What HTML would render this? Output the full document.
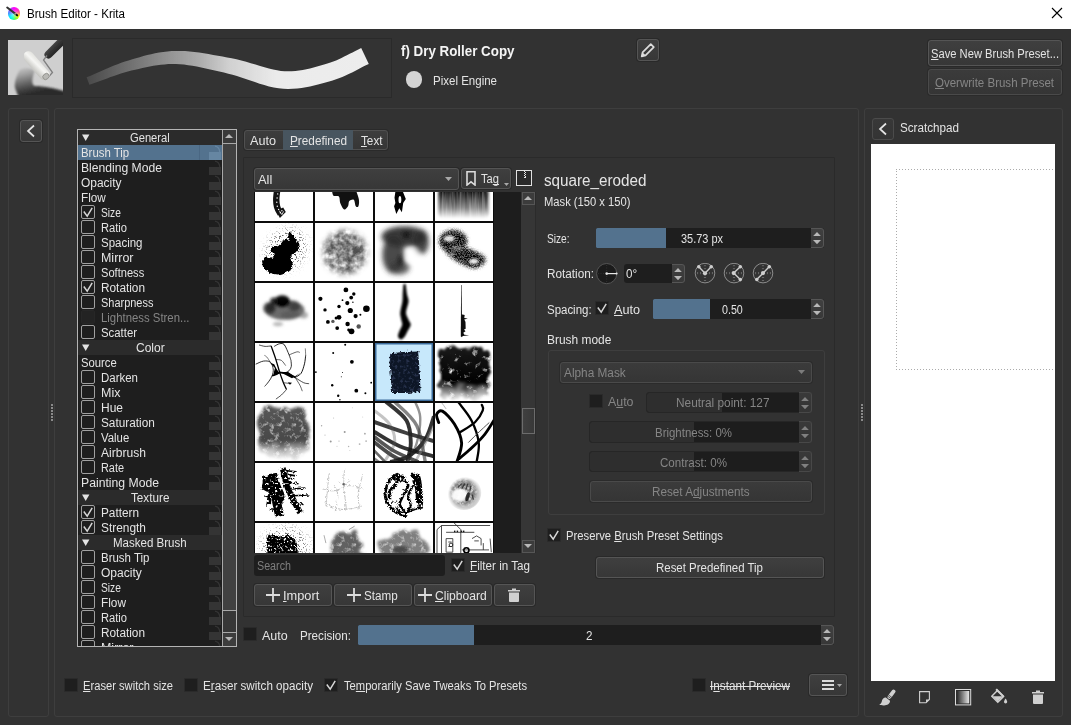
<!DOCTYPE html>
<html><head><meta charset="utf-8"><title>Brush Editor - Krita</title>
<style>

html,body{margin:0;padding:0;}
body{width:1071px;height:725px;overflow:hidden;background:#323232;position:relative;font-family:"Liberation Sans",sans-serif;}
body>div,body>span,body>svg{position:absolute;box-sizing:border-box;}
div div, div svg{position:absolute;box-sizing:border-box;}
.t{position:absolute;white-space:nowrap;display:block;}
u{text-decoration:underline;text-underline-offset:1px;text-decoration-thickness:1px;text-decoration-skip-ink:none;}
.fr{border:1px solid #3e3e3e;border-radius:3px;}
.btn{border:1px solid #555;border-radius:3px;background:linear-gradient(#3f3f3f,#373737);box-shadow:0 0 0 1px #292929;}
.btnd{border:1px solid #4a4a4a;border-radius:3px;background:linear-gradient(#3b3b3b,#353535);box-shadow:0 0 0 1px #2b2b2b;}
.cb{background:#1e1e1e;border:1px solid #2a2a2a;border-radius:1px;}
.lcb{border:1px solid #a0a0a0;border-radius:2px;background:#1e1e1e;}

</style></head>
<body>
<div style="left:0px;top:0px;width:1071px;height:29px;background:#fff;"></div>
<div style="left:7.6px;top:7px;width:12.6px;height:12.6px;border-radius:50%;background:radial-gradient(circle at 50% 55%,rgba(255,255,255,0.55) 0,rgba(255,255,255,0) 55%),conic-gradient(from 0deg,#ff00ff 0deg,#ff30c0 50deg,#ff7a7a 85deg,#ffff00 120deg,#70ff30 160deg,#00ffcc 200deg,#00f0ff 230deg,#4a90ff 275deg,#a050ff 315deg,#ff00ff 360deg);"></div><svg style="left:2px;top:2px;" width="20" height="20" viewBox="0 0 20 20"><path d="M5.2 5.5L13.2 11.6" stroke="#333" stroke-width="2" stroke-linecap="round"/><path d="M12.6 11.2L14 12.3" stroke="#9a9a9a" stroke-width="1.8"/><ellipse cx="14.9" cy="13.1" rx="1.5" ry="1.1" fill="#111" transform="rotate(38 14.9 13.1)"/></svg>
<span id="t0" class="t" style="left:27px;transform-origin:0 50%;top:6px;font-size:12px;line-height:17px;color:#000;transform:scaleX(0.9667);">Brush Editor - Krita</span>
<svg style="left:1051px;top:7px" width="12" height="12" viewBox="0 0 12 12"><path d="M1 1L11 11M11 1L1 11" stroke="#000" stroke-width="1.1" fill="none"/></svg>
<svg style="left:8px;top:40px;overflow:hidden;" width="55" height="55" viewBox="0 0 55 55"><defs><filter id="bb1"><feGaussianBlur stdDeviation="0.6"/></filter><filter id="bb2"><feGaussianBlur stdDeviation="0.9"/></filter>
<linearGradient id="sm" gradientUnits="userSpaceOnUse" x1="14" y1="28" x2="20" y2="54"><stop offset="0" stop-color="#c4c4c4"/><stop offset="0.25" stop-color="#a0a0a0"/><stop offset="0.55" stop-color="#6c6c6c"/><stop offset="0.82" stop-color="#414141"/><stop offset="1" stop-color="#2c2c2c"/></linearGradient>
<linearGradient id="rl" gradientUnits="userSpaceOnUse" x1="32" y1="21" x2="24" y2="29"><stop offset="0" stop-color="#e4e4e0"/><stop offset="0.4" stop-color="#f6f6f4"/><stop offset="1" stop-color="#c4c4c0"/></linearGradient>
<linearGradient id="hd" gradientUnits="userSpaceOnUse" x1="44" y1="5" x2="50" y2="11"><stop offset="0" stop-color="#4a4a4a"/><stop offset="0.5" stop-color="#333"/><stop offset="1" stop-color="#262626"/></linearGradient></defs>
<rect width="55" height="55" fill="#cfcfcf"/>
<g filter="url(#bb2)"><path d="M12 29.5C9 34 6 42 7 48L11 58H58V51.5C48 48.5 36 46 27 46C23.5 45 23.5 40 26.5 31C23 27.5 16 27 12 29.5Z" fill="url(#sm)"/></g>
<g filter="url(#bb1)"><path d="M56 -1L40.5 14.5" stroke="url(#hd)" stroke-width="8" stroke-linecap="round"/>
<path d="M39 15.5L35.5 20L44.5 32.5L40 37.5" fill="none" stroke="#808080" stroke-width="1.3"/>
<path d="M20.5 16.5L36.5 35" stroke="url(#rl)" stroke-width="10.5" stroke-linecap="round"/>
<ellipse cx="38" cy="36.5" rx="3.4" ry="2.8" fill="#b8b8b4" stroke="#8a8a86" stroke-width="0.8" transform="rotate(-40 38 36.5)"/></g></svg>
<div style="left:72px;top:38px;width:320px;height:60px;background:#333;border:1px solid #2a2a2a;"></div>
<svg style="left:72px;top:38px;" width="320" height="60" viewBox="0 0 320 60"><defs><linearGradient id="sg" gradientUnits="userSpaceOnUse" x1="16" y1="0" x2="293" y2="0"><stop offset="0" stop-color="#e4e4e4" stop-opacity="0.13"/><stop offset="0.154" stop-color="#e4e4e4" stop-opacity="0.35"/><stop offset="0.29" stop-color="#e4e4e4" stop-opacity="0.54"/><stop offset="0.40" stop-color="#e4e4e4" stop-opacity="0.68"/><stop offset="0.51" stop-color="#e6e6e6" stop-opacity="0.88"/><stop offset="0.68" stop-color="#ebebeb" stop-opacity="1"/><stop offset="1" stop-color="#ededed"/></linearGradient><filter id="sb"><feGaussianBlur stdDeviation="0.5"/></filter></defs><path d="M17.4 46.7L21.0 45.5L24.5 44.2L28.0 43.0L31.5 41.7L35.0 40.4L38.5 39.1L41.9 37.9L45.4 36.7L48.9 35.5L52.3 34.5L55.8 33.5L59.4 32.6L63.1 31.7L66.7 30.9L70.4 30.0L74.1 29.2L77.7 28.5L81.4 27.8L85.1 27.2L88.8 26.7L92.5 26.4L96.3 26.1L100.1 26.0L104.0 26.1L107.9 26.3L112.0 26.6L116.2 27.2L120.4 27.8L124.8 28.6L129.2 29.5L133.7 30.4L138.2 31.4L142.8 32.5L147.3 33.5L151.9 34.6L156.3 35.7L160.6 36.8L164.9 38.0L169.3 39.4L173.8 41.0L178.3 42.5L182.9 44.1L187.6 45.7L192.3 47.1L197.0 48.5L201.8 49.5L206.6 50.3L211.4 50.8L216.1 50.9L220.7 50.8L225.2 50.5L229.5 50.0L233.8 49.3L238.0 48.5L242.0 47.6L246.0 46.6L249.8 45.6L253.5 44.5L257.1 43.5L260.6 42.4L264.1 41.3L267.6 40.0L270.9 38.7L274.1 37.3L277.2 35.8L280.1 34.4L283.0 32.9L285.8 31.4L288.5 30.0L291.3 28.6L293.9 27.3L296.8 26.0L289.2 10.0L286.3 11.4L283.3 12.9L280.5 14.4L277.7 15.8L274.9 17.3L272.2 18.6L269.5 20.0L266.8 21.3L264.1 22.5L261.3 23.6L258.5 24.6L255.4 25.6L252.1 26.6L248.6 27.6L245.1 28.6L241.6 29.6L238.0 30.5L234.4 31.3L230.8 32.0L227.1 32.5L223.5 33.0L219.8 33.2L216.2 33.3L212.6 33.2L208.9 32.9L205.1 32.2L201.1 31.4L196.9 30.4L192.5 29.2L188.1 27.9L183.5 26.6L178.8 25.2L174.1 23.8L169.3 22.5L164.5 21.3L159.7 20.3L155.1 19.5L150.5 18.6L145.9 17.7L141.2 16.9L136.5 16.1L131.8 15.3L127.1 14.6L122.4 14.0L117.7 13.5L113.1 13.1L108.5 13.0L104.0 12.9L99.6 13.1L95.4 13.5L91.2 14.0L87.1 14.6L83.0 15.3L79.1 16.2L75.2 17.1L71.4 18.1L67.7 19.2L63.9 20.2L60.3 21.3L56.6 22.4L52.9 23.6L49.2 24.8L45.6 26.2L42.0 27.6L38.5 29.0L35.0 30.5L31.6 32.0L28.2 33.5L24.8 34.9L21.4 36.4L18.0 37.9L14.6 39.3Z" fill="url(#sg)" filter="url(#sb)"/></svg>
<span id="t1" class="t" style="left:400.5px;transform-origin:0 50%;top:41px;font-size:14px;line-height:20px;color:#f4f4f4;font-weight:bold;transform:scaleX(0.9537);">f) Dry Roller Copy</span>
<div style="left:405.7px;top:71.4px;width:16.600000000000023px;height:16.599999999999994px;border-radius:50%;background:#d4d4d4;"></div>
<span id="t2" class="t" style="left:433px;transform-origin:0 50%;top:73px;font-size:12px;line-height:17px;color:#e4e4e4;transform:scaleX(0.9593);">Pixel Engine</span>
<div class="btn" style="left:637px;top:39px;width:22px;height:22px;"></div>
<svg style="left:639.1px;top:41.2px" width="17.8" height="17.8" viewBox="0 0 16 16"><g fill="none" stroke="#dcdcdc" stroke-width="1.5" stroke-linejoin="round"><path d="M3.2 10.2L10.6 2.8L13.3 5.5L5.9 12.9L2.4 13.8Z"/></g><path d="M2.4 13.8L3.2 10.3L5.9 12.9Z" fill="#dcdcdc"/></svg>
<div class="btn" style="left:928px;top:40px;width:134px;height:26px;"></div>
<span id="t3" class="t" style="left:931px;transform-origin:0 50%;top:46px;font-size:12px;line-height:17px;color:#e4e4e4;transform:scaleX(0.9315);"><u>S</u>ave New Brush Preset...</span>
<div class="btnd" style="left:928px;top:69px;width:134px;height:26px;"></div>
<span id="t4" class="t" style="left:935.2px;transform-origin:0 50%;top:75px;font-size:12px;line-height:17px;color:#858585;transform:scaleX(0.9593);"><u>O</u>verwrite Brush Preset</span>
<div class="fr" style="left:8px;top:108px;width:41px;height:609px;"></div>
<div class="fr" style="left:54px;top:108px;width:805px;height:609px;"></div>
<div class="fr" style="left:864px;top:108px;width:199px;height:609px;"></div>
<div style="left:51px;top:404px;width:2px;height:2px;background:#8a8a8a;"></div>
<div style="left:51px;top:407px;width:2px;height:2px;background:#8a8a8a;"></div>
<div style="left:51px;top:410px;width:2px;height:2px;background:#8a8a8a;"></div>
<div style="left:51px;top:413px;width:2px;height:2px;background:#8a8a8a;"></div>
<div style="left:51px;top:416px;width:2px;height:2px;background:#8a8a8a;"></div>
<div style="left:51px;top:419px;width:2px;height:2px;background:#8a8a8a;"></div>
<div style="left:861px;top:404px;width:2px;height:2px;background:#8a8a8a;"></div>
<div style="left:861px;top:407px;width:2px;height:2px;background:#8a8a8a;"></div>
<div style="left:861px;top:410px;width:2px;height:2px;background:#8a8a8a;"></div>
<div style="left:861px;top:413px;width:2px;height:2px;background:#8a8a8a;"></div>
<div style="left:861px;top:416px;width:2px;height:2px;background:#8a8a8a;"></div>
<div style="left:861px;top:419px;width:2px;height:2px;background:#8a8a8a;"></div>
<div class="btn" style="left:20px;top:120px;width:22px;height:22px;"></div>
<svg style="left:20px;top:120px;" width="22" height="22" viewBox="0 0 22 22"><path d="M14 5.5L8 11L14 16.5" fill="none" stroke="#e4e4e4" stroke-width="1.7"/></svg>
<div style="left:872px;top:118px;width:22px;height:22px;border:1px solid #4b4b4b;border-radius:3px;background:linear-gradient(#383838,#343434);"></div>
<svg style="left:872px;top:118px;" width="22" height="22" viewBox="0 0 22 22"><path d="M14 5.5L8 11L14 16.5" fill="none" stroke="#e4e4e4" stroke-width="1.7"/></svg>
<span id="t5" class="t" style="left:900px;transform-origin:0 50%;top:120px;font-size:12px;line-height:17px;color:#e4e4e4;transform:scaleX(0.9719);">Scratchpad</span>
<div style="left:871px;top:144px;width:184px;height:537px;background:#fff;"></div>
<svg style="left:896px;top:169px" width="159" height="201" viewBox="0 0 159 201" shape-rendering="crispEdges"><path d="M0 0.5H159M0.5 2V201M0 200.5H159" fill="none" stroke="#ababab" stroke-width="1" stroke-dasharray="1 2"/></svg>
<svg style="left:879px;top:688.5px;" width="17" height="17" viewBox="0 0 17 17"><path d="M14.6 2.4L10.4 8" stroke="#d0d0d0" stroke-width="3.8" stroke-linecap="round"/><path d="M6.8 8.4L11 11.8C11.2 14.8 7.8 16.6 4.6 16.4C2.6 16.4 1 16.2 0.3 15.8C2.4 14.6 2.6 13.2 3 11.6C3.4 9.6 5 8.2 6.8 8.4Z" fill="#d0d0d0"/><path d="M8 6.6L12.6 10.2M9 5.4L13.4 8.9" stroke="#323232" stroke-width="0.7"/></svg>
<svg style="left:919.4px;top:690.6px;" width="12" height="13" viewBox="0 0 12 13"><path d="M0.6 0.6H10.4V8.4L7 11.8H0.6Z" fill="none" stroke="#d0d0d0" stroke-width="1.1"/><path d="M10.4 8.4L7 11.8V8.4Z" fill="#d0d0d0"/></svg>
<svg style="left:954.6px;top:688.8px;" width="17" height="17" viewBox="0 0 17 17"><defs><linearGradient id="gq"><stop offset="0" stop-color="#2a2a2a"/><stop offset="1" stop-color="#e6e6e6"/></linearGradient></defs><rect x="0.5" y="0.5" width="15.2" height="15.4" fill="#2e2e2e" stroke="#dcdcdc" stroke-width="1"/><rect x="2" y="2" width="12.2" height="12.4" fill="url(#gq)"/></svg>
<svg style="left:991px;top:688px;" width="18" height="17" viewBox="0 0 18 17"><path d="M5.2 1.2L12.6 8.6L6.8 14.2L0.8 8.2L6.4 2.6" fill="none" stroke="#d0d0d0" stroke-width="1.4"/><path d="M1.6 8.2H12.2L6.8 13.4Z" fill="#d0d0d0"/><path d="M14.6 10.4C15.6 12 16.2 13 16.2 13.8C16.2 14.8 15.4 15.4 14.6 15.4C13.8 15.4 13 14.8 13 13.8C13 13 13.6 12 14.6 10.4Z" fill="#d0d0d0"/><path d="M5.2 1.2L12.6 8.6" stroke="#d0d0d0" stroke-width="2"/></svg>
<svg style="left:1032px;top:690px;" width="12" height="14" viewBox="0 0 12 14"><path d="M4 0.5H8V2H12V3.6H0V2H4Z" fill="#d0d0d0"/><path d="M1 4.6H11V13Q11 14 10 14H2Q1 14 1 13Z" fill="#d0d0d0"/></svg>
<div style="left:77px;top:129px;width:160px;height:518px;background:#1e1e1e;border:1px solid #b4b4b4;"></div>
<div style="left:0;top:0;width:1071px;height:646px;overflow:hidden;"><div style="left:78px;top:130px;width:144px;height:15px;background:#2b2b2b;"></div>
<svg style="left:82px;top:134px" width="8" height="8" viewBox="0 0 8 8"><path d="M0 0.6H7.4L3.7 7Z" fill="#e4e4e4"/></svg>
<span id="t6" class="t" style="left:130.15px;transform-origin:0 50%;top:130px;font-size:12px;line-height:17px;color:#e4e4e4;transform:scaleX(0.9297);">General</span>
<div style="left:78px;top:145px;width:144px;height:15px;background:#53728e;"></div>
<div style="left:199px;top:145px;width:1px;height:15px;background:#4a6783;"></div>
<svg style="left:209px;top:145px;" width="13" height="15" viewBox="0 0 13 15"><rect x="0" y="7" width="12" height="8" fill="#6686a2"/><path d="M6 1.2C9.5 1.8 10.6 4 10.8 7" fill="none" stroke="#6686a2" stroke-width="1.3"/></svg>
<span id="t7" class="t" style="left:81px;transform-origin:0 50%;top:145px;font-size:12px;line-height:17px;color:#e4e4e4;transform:scaleX(0.9506);">Brush Tip</span>
<svg style="left:209px;top:160px;" width="13" height="15" viewBox="0 0 13 15"><rect x="0" y="7" width="12" height="8" fill="#343434"/><path d="M6 1.2C9.5 1.8 10.6 4 10.8 7" fill="none" stroke="#343434" stroke-width="1.3"/></svg>
<span id="t8" class="t" style="left:81px;transform-origin:0 50%;top:160px;font-size:12px;line-height:17px;color:#e4e4e4;transform:scaleX(1.0117);">Blending Mode</span>
<svg style="left:209px;top:175px;" width="13" height="15" viewBox="0 0 13 15"><rect x="0" y="7" width="12" height="8" fill="#343434"/><path d="M6 1.2C9.5 1.8 10.6 4 10.8 7" fill="none" stroke="#343434" stroke-width="1.3"/></svg>
<span id="t9" class="t" style="left:81px;transform-origin:0 50%;top:175px;font-size:12px;line-height:17px;color:#e4e4e4;transform:scaleX(0.9954);">Opacity</span>
<svg style="left:209px;top:190px;" width="13" height="15" viewBox="0 0 13 15"><rect x="0" y="7" width="12" height="8" fill="#343434"/><path d="M6 1.2C9.5 1.8 10.6 4 10.8 7" fill="none" stroke="#343434" stroke-width="1.3"/></svg>
<span id="t10" class="t" style="left:81px;transform-origin:0 50%;top:190px;font-size:12px;line-height:17px;color:#e4e4e4;transform:scaleX(0.9785);">Flow</span>
<svg style="left:209px;top:205px;" width="13" height="15" viewBox="0 0 13 15"><rect x="0" y="7" width="12" height="8" fill="#343434"/><path d="M6 1.2C9.5 1.8 10.6 4 10.8 7" fill="none" stroke="#343434" stroke-width="1.3"/></svg>
<div class="lcb" style="left:81px;top:205px;width:14px;height:14px;"></div>
<svg style="left:81px;top:205px;" width="14" height="14" viewBox="0 0 14 14"><path d="M2.8 6.5L6.2 11.1L11.2 2.9" fill="none" stroke="#d6d6d6" stroke-width="1.5"/></svg>
<span id="t11" class="t" style="left:101px;transform-origin:0 50%;top:205px;font-size:12px;line-height:17px;color:#e4e4e4;transform:scaleX(0.8482);">Size</span>
<svg style="left:209px;top:220px;" width="13" height="15" viewBox="0 0 13 15"><rect x="0" y="7" width="12" height="8" fill="#343434"/><path d="M6 1.2C9.5 1.8 10.6 4 10.8 7" fill="none" stroke="#343434" stroke-width="1.3"/></svg>
<div class="lcb" style="left:81px;top:220px;width:14px;height:14px;"></div>
<span id="t12" class="t" style="left:101px;transform-origin:0 50%;top:220px;font-size:12px;line-height:17px;color:#e4e4e4;transform:scaleX(0.9281);">Ratio</span>
<svg style="left:209px;top:235px;" width="13" height="15" viewBox="0 0 13 15"><rect x="0" y="7" width="12" height="8" fill="#343434"/><path d="M6 1.2C9.5 1.8 10.6 4 10.8 7" fill="none" stroke="#343434" stroke-width="1.3"/></svg>
<div class="lcb" style="left:81px;top:235px;width:14px;height:14px;"></div>
<span id="t13" class="t" style="left:101px;transform-origin:0 50%;top:235px;font-size:12px;line-height:17px;color:#e4e4e4;transform:scaleX(0.9568);">Spacing</span>
<svg style="left:209px;top:250px;" width="13" height="15" viewBox="0 0 13 15"><rect x="0" y="7" width="12" height="8" fill="#343434"/><path d="M6 1.2C9.5 1.8 10.6 4 10.8 7" fill="none" stroke="#343434" stroke-width="1.3"/></svg>
<div class="lcb" style="left:81px;top:250px;width:14px;height:14px;"></div>
<span id="t14" class="t" style="left:101px;transform-origin:0 50%;top:250px;font-size:12px;line-height:17px;color:#e4e4e4;transform:scaleX(1.0374);">Mirror</span>
<svg style="left:209px;top:265px;" width="13" height="15" viewBox="0 0 13 15"><rect x="0" y="7" width="12" height="8" fill="#343434"/><path d="M6 1.2C9.5 1.8 10.6 4 10.8 7" fill="none" stroke="#343434" stroke-width="1.3"/></svg>
<div class="lcb" style="left:81px;top:265px;width:14px;height:14px;"></div>
<span id="t15" class="t" style="left:101px;transform-origin:0 50%;top:265px;font-size:12px;line-height:17px;color:#e4e4e4;transform:scaleX(0.9250);">Softness</span>
<svg style="left:209px;top:280px;" width="13" height="15" viewBox="0 0 13 15"><rect x="0" y="7" width="12" height="8" fill="#343434"/><path d="M6 1.2C9.5 1.8 10.6 4 10.8 7" fill="none" stroke="#343434" stroke-width="1.3"/></svg>
<div class="lcb" style="left:81px;top:280px;width:14px;height:14px;"></div>
<svg style="left:81px;top:280px;" width="14" height="14" viewBox="0 0 14 14"><path d="M2.8 6.5L6.2 11.1L11.2 2.9" fill="none" stroke="#d6d6d6" stroke-width="1.5"/></svg>
<span id="t16" class="t" style="left:101px;transform-origin:0 50%;top:280px;font-size:12px;line-height:17px;color:#e4e4e4;transform:scaleX(0.9843);">Rotation</span>
<svg style="left:209px;top:295px;" width="13" height="15" viewBox="0 0 13 15"><rect x="0" y="7" width="12" height="8" fill="#343434"/><path d="M6 1.2C9.5 1.8 10.6 4 10.8 7" fill="none" stroke="#343434" stroke-width="1.3"/></svg>
<div class="lcb" style="left:81px;top:295px;width:14px;height:14px;"></div>
<span id="t17" class="t" style="left:101px;transform-origin:0 50%;top:295px;font-size:12px;line-height:17px;color:#e4e4e4;transform:scaleX(0.9133);">Sharpness</span>
<svg style="left:209px;top:310px;" width="13" height="15" viewBox="0 0 13 15"><rect x="0" y="7" width="12" height="8" fill="#343434"/><path d="M6 1.2C9.5 1.8 10.6 4 10.8 7" fill="none" stroke="#343434" stroke-width="1.3"/></svg>
<div style="left:81px;top:310px;width:14px;height:14px;background:#232323;border:1px solid #272727;border-radius:2px;"></div>
<span id="t18" class="t" style="left:101px;transform-origin:0 50%;top:310px;font-size:12px;line-height:17px;color:#858585;transform:scaleX(0.9476);">Lightness Stren...</span>
<svg style="left:209px;top:325px;" width="13" height="15" viewBox="0 0 13 15"><rect x="0" y="7" width="12" height="8" fill="#343434"/><path d="M6 1.2C9.5 1.8 10.6 4 10.8 7" fill="none" stroke="#343434" stroke-width="1.3"/></svg>
<div class="lcb" style="left:81px;top:325px;width:14px;height:14px;"></div>
<span id="t19" class="t" style="left:101px;transform-origin:0 50%;top:325px;font-size:12px;line-height:17px;color:#e4e4e4;transform:scaleX(0.9470);">Scatter</span>
<div style="left:78px;top:340px;width:144px;height:15px;background:#2b2b2b;"></div>
<svg style="left:82px;top:344px" width="8" height="8" viewBox="0 0 8 8"><path d="M0 0.6H7.4L3.7 7Z" fill="#e4e4e4"/></svg>
<span id="t20" class="t" style="left:135.65px;transform-origin:0 50%;top:340px;font-size:12px;line-height:17px;color:#e4e4e4;transform:scaleX(1.0004);">Color</span>
<svg style="left:209px;top:355px;" width="13" height="15" viewBox="0 0 13 15"><rect x="0" y="7" width="12" height="8" fill="#343434"/><path d="M6 1.2C9.5 1.8 10.6 4 10.8 7" fill="none" stroke="#343434" stroke-width="1.3"/></svg>
<span id="t21" class="t" style="left:81px;transform-origin:0 50%;top:355px;font-size:12px;line-height:17px;color:#e4e4e4;transform:scaleX(0.9387);">Source</span>
<svg style="left:209px;top:370px;" width="13" height="15" viewBox="0 0 13 15"><rect x="0" y="7" width="12" height="8" fill="#343434"/><path d="M6 1.2C9.5 1.8 10.6 4 10.8 7" fill="none" stroke="#343434" stroke-width="1.3"/></svg>
<div class="lcb" style="left:81px;top:370px;width:14px;height:14px;"></div>
<span id="t22" class="t" style="left:101px;transform-origin:0 50%;top:370px;font-size:12px;line-height:17px;color:#e4e4e4;transform:scaleX(0.9564);">Darken</span>
<svg style="left:209px;top:385px;" width="13" height="15" viewBox="0 0 13 15"><rect x="0" y="7" width="12" height="8" fill="#343434"/><path d="M6 1.2C9.5 1.8 10.6 4 10.8 7" fill="none" stroke="#343434" stroke-width="1.3"/></svg>
<div class="lcb" style="left:81px;top:385px;width:14px;height:14px;"></div>
<span id="t23" class="t" style="left:101px;transform-origin:0 50%;top:385px;font-size:12px;line-height:17px;color:#e4e4e4;transform:scaleX(1.0390);">Mix</span>
<svg style="left:209px;top:400px;" width="13" height="15" viewBox="0 0 13 15"><rect x="0" y="7" width="12" height="8" fill="#343434"/><path d="M6 1.2C9.5 1.8 10.6 4 10.8 7" fill="none" stroke="#343434" stroke-width="1.3"/></svg>
<div class="lcb" style="left:81px;top:400px;width:14px;height:14px;"></div>
<span id="t24" class="t" style="left:101px;transform-origin:0 50%;top:400px;font-size:12px;line-height:17px;color:#e4e4e4;transform:scaleX(0.9993);">Hue</span>
<svg style="left:209px;top:415px;" width="13" height="15" viewBox="0 0 13 15"><rect x="0" y="7" width="12" height="8" fill="#343434"/><path d="M6 1.2C9.5 1.8 10.6 4 10.8 7" fill="none" stroke="#343434" stroke-width="1.3"/></svg>
<div class="lcb" style="left:81px;top:415px;width:14px;height:14px;"></div>
<span id="t25" class="t" style="left:101px;transform-origin:0 50%;top:415px;font-size:12px;line-height:17px;color:#e4e4e4;transform:scaleX(0.9835);">Saturation</span>
<svg style="left:209px;top:430px;" width="13" height="15" viewBox="0 0 13 15"><rect x="0" y="7" width="12" height="8" fill="#343434"/><path d="M6 1.2C9.5 1.8 10.6 4 10.8 7" fill="none" stroke="#343434" stroke-width="1.3"/></svg>
<div class="lcb" style="left:81px;top:430px;width:14px;height:14px;"></div>
<span id="t26" class="t" style="left:101px;transform-origin:0 50%;top:430px;font-size:12px;line-height:17px;color:#e4e4e4;transform:scaleX(0.9459);">Value</span>
<svg style="left:209px;top:445px;" width="13" height="15" viewBox="0 0 13 15"><rect x="0" y="7" width="12" height="8" fill="#343434"/><path d="M6 1.2C9.5 1.8 10.6 4 10.8 7" fill="none" stroke="#343434" stroke-width="1.3"/></svg>
<div class="lcb" style="left:81px;top:445px;width:14px;height:14px;"></div>
<span id="t27" class="t" style="left:101px;transform-origin:0 50%;top:445px;font-size:12px;line-height:17px;color:#e4e4e4;transform:scaleX(1.0070);">Airbrush</span>
<svg style="left:209px;top:460px;" width="13" height="15" viewBox="0 0 13 15"><rect x="0" y="7" width="12" height="8" fill="#343434"/><path d="M6 1.2C9.5 1.8 10.6 4 10.8 7" fill="none" stroke="#343434" stroke-width="1.3"/></svg>
<div class="lcb" style="left:81px;top:460px;width:14px;height:14px;"></div>
<span id="t28" class="t" style="left:101px;transform-origin:0 50%;top:460px;font-size:12px;line-height:17px;color:#e4e4e4;transform:scaleX(0.9070);">Rate</span>
<svg style="left:209px;top:475px;" width="13" height="15" viewBox="0 0 13 15"><rect x="0" y="7" width="12" height="8" fill="#343434"/><path d="M6 1.2C9.5 1.8 10.6 4 10.8 7" fill="none" stroke="#343434" stroke-width="1.3"/></svg>
<span id="t29" class="t" style="left:81px;transform-origin:0 50%;top:475px;font-size:12px;line-height:17px;color:#e4e4e4;transform:scaleX(1.0167);">Painting Mode</span>
<div style="left:78px;top:490px;width:144px;height:15px;background:#2b2b2b;"></div>
<svg style="left:82px;top:494px" width="8" height="8" viewBox="0 0 8 8"><path d="M0 0.6H7.4L3.7 7Z" fill="#e4e4e4"/></svg>
<span id="t30" class="t" style="left:130.8px;transform-origin:0 50%;top:490px;font-size:12px;line-height:17px;color:#e4e4e4;transform:scaleX(0.9756);">Texture</span>
<svg style="left:209px;top:505px;" width="13" height="15" viewBox="0 0 13 15"><rect x="0" y="7" width="12" height="8" fill="#343434"/><path d="M6 1.2C9.5 1.8 10.6 4 10.8 7" fill="none" stroke="#343434" stroke-width="1.3"/></svg>
<div class="lcb" style="left:81px;top:505px;width:14px;height:14px;"></div>
<svg style="left:81px;top:505px;" width="14" height="14" viewBox="0 0 14 14"><path d="M2.8 6.5L6.2 11.1L11.2 2.9" fill="none" stroke="#d6d6d6" stroke-width="1.5"/></svg>
<span id="t31" class="t" style="left:101px;transform-origin:0 50%;top:505px;font-size:12px;line-height:17px;color:#e4e4e4;transform:scaleX(0.9818);">Pattern</span>
<svg style="left:209px;top:520px;" width="13" height="15" viewBox="0 0 13 15"><rect x="0" y="7" width="12" height="8" fill="#343434"/><path d="M6 1.2C9.5 1.8 10.6 4 10.8 7" fill="none" stroke="#343434" stroke-width="1.3"/></svg>
<div class="lcb" style="left:81px;top:520px;width:14px;height:14px;"></div>
<svg style="left:81px;top:520px;" width="14" height="14" viewBox="0 0 14 14"><path d="M2.8 6.5L6.2 11.1L11.2 2.9" fill="none" stroke="#d6d6d6" stroke-width="1.5"/></svg>
<span id="t32" class="t" style="left:101px;transform-origin:0 50%;top:520px;font-size:12px;line-height:17px;color:#e4e4e4;transform:scaleX(0.9917);">Strength</span>
<div style="left:78px;top:535px;width:144px;height:15px;background:#2b2b2b;"></div>
<svg style="left:82px;top:539px" width="8" height="8" viewBox="0 0 8 8"><path d="M0 0.6H7.4L3.7 7Z" fill="#e4e4e4"/></svg>
<span id="t33" class="t" style="left:113.15px;transform-origin:0 50%;top:535px;font-size:12px;line-height:17px;color:#e4e4e4;transform:scaleX(0.9608);">Masked Brush</span>
<svg style="left:209px;top:550px;" width="13" height="15" viewBox="0 0 13 15"><rect x="0" y="7" width="12" height="8" fill="#343434"/><path d="M6 1.2C9.5 1.8 10.6 4 10.8 7" fill="none" stroke="#343434" stroke-width="1.3"/></svg>
<div class="lcb" style="left:81px;top:550px;width:14px;height:14px;"></div>
<span id="t34" class="t" style="left:101px;transform-origin:0 50%;top:550px;font-size:12px;line-height:17px;color:#e4e4e4;transform:scaleX(0.9565);">Brush Tip</span>
<svg style="left:209px;top:565px;" width="13" height="15" viewBox="0 0 13 15"><rect x="0" y="7" width="12" height="8" fill="#343434"/><path d="M6 1.2C9.5 1.8 10.6 4 10.8 7" fill="none" stroke="#343434" stroke-width="1.3"/></svg>
<div class="lcb" style="left:81px;top:565px;width:14px;height:14px;"></div>
<span id="t35" class="t" style="left:101px;transform-origin:0 50%;top:565px;font-size:12px;line-height:17px;color:#e4e4e4;transform:scaleX(1.0028);">Opacity</span>
<svg style="left:209px;top:580px;" width="13" height="15" viewBox="0 0 13 15"><rect x="0" y="7" width="12" height="8" fill="#343434"/><path d="M6 1.2C9.5 1.8 10.6 4 10.8 7" fill="none" stroke="#343434" stroke-width="1.3"/></svg>
<div class="lcb" style="left:81px;top:580px;width:14px;height:14px;"></div>
<span id="t36" class="t" style="left:101px;transform-origin:0 50%;top:580px;font-size:12px;line-height:17px;color:#e4e4e4;transform:scaleX(0.8482);">Size</span>
<svg style="left:209px;top:595px;" width="13" height="15" viewBox="0 0 13 15"><rect x="0" y="7" width="12" height="8" fill="#343434"/><path d="M6 1.2C9.5 1.8 10.6 4 10.8 7" fill="none" stroke="#343434" stroke-width="1.3"/></svg>
<div class="lcb" style="left:81px;top:595px;width:14px;height:14px;"></div>
<span id="t37" class="t" style="left:101px;transform-origin:0 50%;top:595px;font-size:12px;line-height:17px;color:#e4e4e4;transform:scaleX(0.9864);">Flow</span>
<svg style="left:209px;top:610px;" width="13" height="15" viewBox="0 0 13 15"><rect x="0" y="7" width="12" height="8" fill="#343434"/><path d="M6 1.2C9.5 1.8 10.6 4 10.8 7" fill="none" stroke="#343434" stroke-width="1.3"/></svg>
<div class="lcb" style="left:81px;top:610px;width:14px;height:14px;"></div>
<span id="t38" class="t" style="left:101px;transform-origin:0 50%;top:610px;font-size:12px;line-height:17px;color:#e4e4e4;transform:scaleX(0.9281);">Ratio</span>
<svg style="left:209px;top:625px;" width="13" height="15" viewBox="0 0 13 15"><rect x="0" y="7" width="12" height="8" fill="#343434"/><path d="M6 1.2C9.5 1.8 10.6 4 10.8 7" fill="none" stroke="#343434" stroke-width="1.3"/></svg>
<div class="lcb" style="left:81px;top:625px;width:14px;height:14px;"></div>
<span id="t39" class="t" style="left:101px;transform-origin:0 50%;top:625px;font-size:12px;line-height:17px;color:#e4e4e4;transform:scaleX(0.9843);">Rotation</span>
<svg style="left:209px;top:640px;" width="13" height="15" viewBox="0 0 13 15"><rect x="0" y="7" width="12" height="8" fill="#343434"/><path d="M6 1.2C9.5 1.8 10.6 4 10.8 7" fill="none" stroke="#343434" stroke-width="1.3"/></svg>
<div class="lcb" style="left:81px;top:640px;width:14px;height:14px;"></div>
<span id="t40" class="t" style="left:101px;transform-origin:0 50%;top:640px;font-size:12px;line-height:17px;color:#e4e4e4;transform:scaleX(1.0374);">Mirror</span></div>
<div style="left:222px;top:130px;width:14px;height:516px;background:#373737;border-left:1px solid #a8a8a8;"></div>
<div style="left:223px;top:130px;width:13px;height:14px;background:#3a3a3a;border-bottom:1px solid #a8a8a8;"></div>
<svg style="left:225px;top:134px;" width="8" height="4" viewBox="0 0 8 4"><path d="M0 4H8L4.0 0Z" fill="#b8b8b8"/></svg>
<div style="left:223px;top:632px;width:13px;height:14px;background:#3d3d3d;border-top:1px solid #a8a8a8;"></div>
<svg style="left:225px;top:637px;" width="8" height="4" viewBox="0 0 8 4"><path d="M0 0H8L4.0 4Z" fill="#b8b8b8"/></svg>
<div style="left:223px;top:144px;width:13px;height:467px;background:#414141;border-bottom:1px solid #a8a8a8;"></div>
<div style="left:244px;top:130px;width:144px;height:20px;border:1px solid #505050;border-radius:3px;background:linear-gradient(#3d3d3d,#363636);box-shadow:0 0 0 1px #2a2a2a;"></div>
<div style="left:283px;top:130px;width:70px;height:20px;background:#48555f;"></div>
<span id="t41" class="t" style="left:250px;transform-origin:0 50%;top:133px;font-size:12px;line-height:17px;color:#e4e4e4;transform:scaleX(1.0532);">Auto</span>
<span id="t42" class="t" style="left:290px;transform-origin:0 50%;top:133px;font-size:12px;line-height:17px;color:#e4e4e4;transform:scaleX(0.9817);"><u>P</u>redefined</span>
<span id="t43" class="t" style="left:360.5px;transform-origin:0 50%;top:133px;font-size:12px;line-height:17px;color:#e4e4e4;transform:scaleX(0.9766);"><u>T</u>ext</span>
<div style="left:243px;top:157px;width:592px;height:460px;border:1px solid #2a2a2a;border-radius:1px;"></div>
<div class="btn" style="left:254px;top:168px;width:205px;height:22px;"></div>
<span id="t44" class="t" style="left:258px;transform-origin:0 50%;top:172px;font-size:12px;line-height:17px;color:#e4e4e4;transform:scaleX(1.0717);">All</span>
<svg style="left:445px;top:177px;" width="7" height="4" viewBox="0 0 7 4"><path d="M0 0H7L3.5 4Z" fill="#a8a8a8"/></svg>
<div class="btn" style="left:461px;top:168px;width:50px;height:21px;"></div>
<svg style="left:466px;top:171px;" width="10" height="15" viewBox="0 0 10 15"><path d="M1 0.8H9V14L5 10.8L1 14Z" fill="none" stroke="#dcdcdc" stroke-width="1.6"/></svg>
<span id="t45" class="t" style="left:481px;transform-origin:0 50%;top:171px;font-size:12px;line-height:17px;color:#e4e4e4;transform:scaleX(0.9290);">Ta<u>g</u></span>
<svg style="left:504px;top:183px;" width="5" height="3" viewBox="0 0 5 3"><path d="M0 0H5L2.5 3Z" fill="#a8a8a8"/></svg>
<svg style="left:516px;top:170px;" width="16" height="16" viewBox="0 0 16 16"><rect x="0.5" y="0.5" width="15" height="15" fill="#2a2a2a" stroke="#e0e0e0" stroke-width="1"/><g fill="#e4e4e4" shape-rendering="crispEdges"><rect x="8" y="1" width="1" height="1"/><rect x="9" y="2" width="1" height="1"/><rect x="8" y="3" width="1" height="1"/><rect x="9" y="4" width="1" height="1"/><rect x="8" y="5" width="1" height="1"/><rect x="9" y="6" width="1" height="1"/><rect x="8" y="7" width="2" height="1"/></g></svg>
<div style="left:254px;top:192px;width:267px;height:361px;background:#1d1d1d;"></div>
<div style="left:254px;top:192px;width:240px;height:361px;background:#0c0c0c;"></div>
<svg style="left:255px;top:192px" width="238" height="361" viewBox="0 29 238 361">
<defs>
<clipPath id="tcc"><rect x="0" y="0" width="58" height="58"/></clipPath>
<filter id="tb03"><feGaussianBlur stdDeviation="0.3"/></filter>
<filter id="tb06"><feGaussianBlur stdDeviation="0.6"/></filter>
<filter id="tb1"><feGaussianBlur stdDeviation="1"/></filter>
<filter id="tb15"><feGaussianBlur stdDeviation="1.5"/></filter>
<filter id="tb25" x="-20%" y="-20%" width="140%" height="140%"><feGaussianBlur stdDeviation="2.4"/></filter>
<filter id="tb3" x="-30%" y="-30%" width="160%" height="160%"><feGaussianBlur stdDeviation="3.2"/></filter>
<filter id="trough" x="-10%" y="-10%" width="120%" height="120%"><feTurbulence type="fractalNoise" baseFrequency="0.3" numOctaves="2" seed="4" result="n"/><feDisplacementMap in="SourceGraphic" in2="n" scale="5" xChannelSelector="R" yChannelSelector="G"/></filter>
<filter id="trough2" x="-10%" y="-10%" width="120%" height="120%"><feTurbulence type="fractalNoise" baseFrequency="0.5" numOctaves="2" seed="9" result="n"/><feDisplacementMap in="SourceGraphic" in2="n" scale="5" xChannelSelector="R" yChannelSelector="G"/></filter>
<filter id="tspeck" x="0" y="0" width="100%" height="100%"><feTurbulence type="fractalNoise" baseFrequency="0.35" numOctaves="2" seed="23" result="n"/><feColorMatrix in="n" type="matrix" values="0 0 0 0 0 0 0 0 0 0 0 0 0 0 0 5 0 0 0 -2.6" result="m"/><feComposite in="SourceGraphic" in2="m" operator="in"/></filter>
<filter id="trough3" x="-10%" y="-10%" width="120%" height="120%"><feTurbulence type="fractalNoise" baseFrequency="0.45" numOctaves="2" seed="2" result="n"/><feColorMatrix in="n" type="matrix" values="0 0 0 0 0 0 0 0 0 0 0 0 0 0 0 6 0 0 0 -1.7" result="m"/><feDisplacementMap in="SourceGraphic" in2="n" scale="4" xChannelSelector="R" yChannelSelector="G" result="d"/><feComposite in="d" in2="m" operator="in"/></filter>
<filter id="trough4" x="-10%" y="-10%" width="120%" height="120%"><feTurbulence type="fractalNoise" baseFrequency="0.4" numOctaves="2" seed="12" result="n"/><feColorMatrix in="n" type="matrix" values="0 0 0 0 0 0 0 0 0 0 0 0 0 0 0 8 0 0 0 -2.2" result="m"/><feDisplacementMap in="SourceGraphic" in2="n" scale="3.5" xChannelSelector="R" yChannelSelector="G" result="d"/><feComposite in="d" in2="m" operator="in"/></filter>
<filter id="tveins" x="-10%" y="-10%" width="120%" height="120%"><feTurbulence type="turbulence" baseFrequency="0.11" numOctaves="2" seed="5" result="n"/><feColorMatrix in="n" type="matrix" values="0 0 0 0 0 0 0 0 0 0 0 0 0 0 0 6 0 0 0 -0.5" result="m"/><feGaussianBlur in="SourceGraphic" stdDeviation="3" result="b"/><feComposite in="b" in2="m" operator="in"/></filter>
<filter id="tstreak" x="-5%" y="-5%" width="110%" height="110%"><feTurbulence type="fractalNoise" baseFrequency="0.4 0.03" numOctaves="2" seed="6" result="n"/><feColorMatrix in="n" type="matrix" values="0 0 0 0 0 0 0 0 0 0 0 0 0 0 0 0.7 0 0 0 0.55" result="m"/><feGaussianBlur in="SourceGraphic" stdDeviation="1" result="b"/><feComposite in="b" in2="m" operator="in"/></filter>
<filter id="tcloud" x="-20%" y="-20%" width="140%" height="140%"><feTurbulence type="fractalNoise" baseFrequency="0.13" numOctaves="3" seed="14" result="n"/><feColorMatrix in="n" type="matrix" values="0 0 0 0 0 0 0 0 0 0 0 0 0 0 0 2.2 0 0 0 -0.45" result="m"/><feGaussianBlur in="SourceGraphic" stdDeviation="3.2" result="b"/><feComposite in="b" in2="m" operator="in"/></filter>
<filter id="tgr1" x="-10%" y="-10%" width="120%" height="120%"><feTurbulence type="fractalNoise" baseFrequency="0.7" numOctaves="2" seed="3" result="n"/><feColorMatrix in="n" type="matrix" values="0 0 0 0 0 0 0 0 0 0 0 0 0 0 0 9 0 0 0 -5.2" result="m"/><feGaussianBlur in="SourceGraphic" stdDeviation="5" result="b"/><feComposite in="b" in2="m" operator="in"/></filter>
<filter id="tgr2" x="-10%" y="-10%" width="120%" height="120%"><feTurbulence type="fractalNoise" baseFrequency="0.9" numOctaves="2" seed="8" result="n"/><feColorMatrix in="n" type="matrix" values="0 0 0 0 0 0 0 0 0 0 0 0 0 0 0 3.5 0 0 0 -1.2" result="m"/><feGaussianBlur in="SourceGraphic" stdDeviation="2.2" result="b"/><feComposite in="b" in2="m" operator="in"/></filter>
<filter id="tgr3" x="-10%" y="-10%" width="120%" height="120%"><feTurbulence type="fractalNoise" baseFrequency="0.16" numOctaves="4" seed="11" result="n"/><feColorMatrix in="n" type="matrix" values="0 0 0 0 0 0 0 0 0 0 0 0 0 0 0 3 0 0 0 -0.2" result="m"/><feTurbulence type="fractalNoise" baseFrequency="0.09" numOctaves="2" seed="5" result="n2"/><feDisplacementMap in="SourceGraphic" in2="n2" scale="12" xChannelSelector="R" yChannelSelector="G" result="d"/><feGaussianBlur in="d" stdDeviation="1.2" result="b"/><feComposite in="b" in2="m" operator="in"/></filter>
<filter id="tgr4" x="-10%" y="-10%" width="120%" height="120%"><feTurbulence type="fractalNoise" baseFrequency="0.2" numOctaves="4" seed="21" result="n"/><feColorMatrix in="n" type="matrix" values="0 0 0 0 0 0 0 0 0 0 0 0 0 0 0 2.2 0 0 0 -0.05" result="m"/><feTurbulence type="fractalNoise" baseFrequency="0.09" numOctaves="2" seed="17" result="n2"/><feDisplacementMap in="SourceGraphic" in2="n2" scale="12" xChannelSelector="R" yChannelSelector="G" result="d"/><feGaussianBlur in="d" stdDeviation="1.4" result="b"/><feComposite in="b" in2="m" operator="in"/></filter>
<filter id="tgr5" x="-10%" y="-10%" width="120%" height="120%"><feTurbulence type="fractalNoise" baseFrequency="0.3" numOctaves="3" seed="31" result="n"/><feColorMatrix in="n" type="matrix" values="0 0 0 0 0 0 0 0 0 0 0 0 0 0 0 3 0 0 0 -0.8" result="m"/><feGaussianBlur in="SourceGraphic" stdDeviation="1.5" result="b"/><feComposite in="b" in2="m" operator="in"/></filter>
</defs>
<g transform="translate(0,0)" clip-path="url(#tcc)"><rect width="58" height="58" fill="#fff"/><path d="M23.0 21.8C22.7 24.0 21.5 31.1 21.3 34.8C21.1 38.5 21.4 41.2 22.1 43.9C22.8 46.6 25.0 49.8 25.6 51.0" fill="none" stroke="#111" stroke-width="6.4" stroke-linecap="butt"/><path d="M21.0 47.7L24.9 54.9L30.8 49.0L28.2 44.5Z" fill="#111"/><circle cx="22.7" cy="30.9" r="0.7" fill="#fff"/><circle cx="22.1" cy="35.0" r="0.7" fill="#fff"/><circle cx="21.8" cy="39.3" r="0.7" fill="#fff"/><circle cx="22.3" cy="43.2" r="0.7" fill="#fff"/><circle cx="23.6" cy="46.4" r="0.7" fill="#fff"/><circle cx="25.3" cy="49.7" r="0.7" fill="#fff"/><circle cx="26.9" cy="47.7" r="0.7" fill="#fff"/><path d="M24.3 47.7L26.9 51.6L28.6 48.4" stroke="#fff" stroke-width="0.8" fill="none"/></g>
<g transform="translate(60,0)" clip-path="url(#tcc)"><rect width="58" height="58" fill="#fff"/><path d="M16.8 23.1C17.0 24.6 16.9 30.5 18.1 32.2C19.3 33.9 22.7 32.2 23.9 33.5C25.1 34.8 24.4 37.8 25.2 40.0C26.1 42.1 27.8 45.9 29.1 46.4C30.4 47.0 32.1 44.6 33.0 43.2C33.9 41.8 33.3 39.1 34.3 38.0C35.3 36.9 37.7 35.9 38.8 36.7C39.9 37.6 40.0 42.1 40.8 43.2C41.5 44.3 42.9 44.4 43.4 43.2C43.9 42.0 44.4 39.4 43.8 36.1C43.1 32.7 40.2 25.3 39.5 23.1Z" fill="#111"/></g>
<g transform="translate(120,0)" clip-path="url(#tcc)"><rect width="58" height="58" fill="#fff"/><path d="M21.0 24.4L19.5 34.8L20.4 40.0L19.1 43.2L21.3 51.0L24.3 45.2L26.9 49.3L28.2 40.0L30.8 36.1L28.2 29.6L26.9 24.4Z" fill="#000"/><ellipse cx="24.9" cy="36.7" rx="1.4" ry="3.6" fill="#fff"/></g>
<g transform="translate(180,0)" clip-path="url(#tcc)"><rect width="58" height="58" fill="#fff"/><defs><linearGradient id="tg03" x1="0" y1="0" x2="0" y2="1"><stop offset="0" stop-color="#000" stop-opacity="1"/><stop offset="0.28" stop-color="#000" stop-opacity="0.8"/><stop offset="0.65" stop-color="#000" stop-opacity="0.5"/><stop offset="1" stop-color="#000" stop-opacity="0"/></linearGradient></defs><g filter="url(#tstreak)"><rect x="3.2" y="25.3" width="50.6" height="30.2" rx="5" fill="url(#tg03)"/></g></g>
<g transform="translate(0,60)" clip-path="url(#tcc)"><rect width="58" height="58" fill="#fff"/><g filter="url(#tgr1)"><ellipse cx="31" cy="27" rx="18" ry="22" fill="#000" opacity="0.75" transform="rotate(40 31 27)"/></g><path d="M6.8 37.0C7.1 38.3 7.2 42.6 8.7 44.8C10.2 47.0 13.2 48.9 15.9 50.0C18.6 51.1 21.9 51.7 24.9 51.3C28.0 50.8 31.8 49.1 34.0 47.4C36.2 45.7 37.7 43.1 37.9 40.9C38.1 38.7 34.7 36.6 35.3 34.4C36.0 32.3 40.3 30.1 41.8 27.9C43.3 25.8 44.6 23.4 44.4 21.5C44.2 19.5 41.8 18.2 40.5 16.3C39.2 14.3 37.8 10.6 36.6 9.8C35.4 8.9 33.8 10.0 33.4 11.1C32.9 12.2 34.8 15.2 34.0 16.3C33.2 17.3 30.5 16.5 28.8 17.6C27.1 18.6 25.8 21.5 23.6 22.7C21.5 24.0 16.7 24.0 15.9 25.3C15.0 26.6 18.2 29.0 18.4 30.5C18.7 32.0 18.7 33.8 17.2 34.4C15.6 35.1 10.7 34.4 9.4 34.4Z" fill="#000" filter="url(#trough)"/></g>
<g transform="translate(60,60)" clip-path="url(#tcc)"><rect width="58" height="58" fill="#fff"/><g filter="url(#tcloud)" opacity="0.66"><circle cx="29.8" cy="29.2" r="21.5" fill="#000"/></g><g filter="url(#tveins)" opacity="0.10"><circle cx="29.8" cy="29.2" r="19" fill="#000"/></g></g>
<g transform="translate(120,60)" clip-path="url(#tcc)"><rect width="58" height="58" fill="#fff"/><g filter="url(#tb25)"><ellipse cx="29.5" cy="13.7" rx="23.1" ry="10.4" fill="#262626" opacity="0.9"/><ellipse cx="46.3" cy="18.9" rx="7.5" ry="12.3" fill="#2c2c2c" opacity="0.85"/><ellipse cx="18.4" cy="31.8" rx="11.0" ry="18.8" fill="#2c2c2c" opacity="0.85"/><ellipse cx="24.3" cy="44.8" rx="10.4" ry="6.7" fill="#3a3a3a" opacity="0.8"/><ellipse cx="31.4" cy="11.7" rx="3.9" ry="3.2" fill="#000" opacity="0.8"/><ellipse cx="26.2" cy="37.7" rx="2.9" ry="5.8" fill="#000" opacity="0.8"/><ellipse cx="37.9" cy="31.8" rx="5.8" ry="5.2" fill="#fff" opacity="0.9"/></g></g>
<g transform="translate(180,60)" clip-path="url(#tcc)"><rect width="58" height="58" fill="#fff"/><g filter="url(#tb15)" opacity="0.72"><ellipse cx="18.1" cy="18.2" rx="13.6" ry="11.0" fill="#333" opacity="1"/><path d="M9.0 25.3C10.3 26.9 12.0 31.2 16.8 34.4C21.5 37.7 32.1 43.9 37.5 44.8C42.9 45.7 47.5 41.5 49.2 39.6C50.9 37.7 51.1 35.7 47.9 33.1C44.7 30.5 32.8 25.6 29.8 24.0Z" fill="#333"/></g><g filter="url(#tgr2)"><ellipse cx="18.1" cy="18.2" rx="13.6" ry="11.0" fill="#000" opacity="1"/><path d="M9.0 25.3C10.3 26.9 12.0 31.2 16.8 34.4C21.5 37.7 32.1 43.9 37.5 44.8C42.9 45.7 47.5 41.5 49.2 39.6C50.9 37.7 51.1 35.7 47.9 33.1C44.7 30.5 32.8 25.6 29.8 24.0Z" fill="#000"/></g><g filter="url(#tb1)"><ellipse cx="14.2" cy="15.6" rx="5.4" ry="3.1" fill="#fff" opacity="0.85"/><ellipse cx="38.8" cy="38.3" rx="4.7" ry="2.6" fill="#fff" opacity="0.9"/><ellipse cx="16.8" cy="31.4" rx="1.8" ry="1.3" fill="#fff" opacity="0.8"/><ellipse cx="22.0" cy="25.3" rx="6.5" ry="2.3" fill="#fff" opacity="0.35"/></g></g>
<g transform="translate(0,120)" clip-path="url(#tcc)"><rect width="58" height="58" fill="#fff"/><g filter="url(#tb15)"><ellipse cx="29.8" cy="26.9" rx="19.7" ry="9.9" fill="#444" opacity="0.8"/><ellipse cx="14.4" cy="25.2" rx="6.2" ry="6.2" fill="#333" opacity="0.8"/><ellipse cx="38.4" cy="22.7" rx="6.5" ry="5.5" fill="#444" opacity="0.6"/><ellipse cx="35.8" cy="32.1" rx="10.3" ry="3.8" fill="#555" opacity="0.6"/><ellipse cx="48.6" cy="32.1" rx="4.4" ry="3.4" fill="#777" opacity="0.6"/><ellipse cx="23.0" cy="41.1" rx="5.1" ry="2.1" fill="#888" opacity="0.6"/><ellipse cx="27.2" cy="18.4" rx="7.9" ry="6.2" fill="#000" opacity="0.97"/><ellipse cx="19.2" cy="17.9" rx="4.1" ry="3.4" fill="#111" opacity="0.85"/><ellipse cx="15.3" cy="24.4" rx="4.4" ry="4.1" fill="#222" opacity="0.7"/><ellipse cx="40.1" cy="23.5" rx="5.1" ry="4.1" fill="#333" opacity="0.6"/></g></g>
<g transform="translate(60,120)" clip-path="url(#tcc)"><rect width="58" height="58" fill="#fff"/><g filter="url(#tb03)"><circle cx="30.9" cy="6.9" r="2.4" fill="#000"/><circle cx="38.8" cy="11.0" r="1.7" fill="#000"/><circle cx="36.2" cy="14.6" r="1.9" fill="#000"/><circle cx="5.4" cy="15.8" r="2.1" fill="#000"/><circle cx="27.5" cy="17.2" r="0.9" fill="#000"/><circle cx="32.3" cy="20.1" r="2.1" fill="#000"/><circle cx="37.9" cy="19.2" r="0.7" fill="#000"/><circle cx="24.0" cy="23.5" r="1.7" fill="#000"/><circle cx="51.4" cy="25.7" r="3.3" fill="#000"/><circle cx="10.0" cy="26.9" r="1.7" fill="#000"/><circle cx="35.3" cy="27.5" r="2.6" fill="#000"/><circle cx="45.4" cy="31.7" r="1.0" fill="#000"/><circle cx="40.6" cy="33.1" r="2.1" fill="#000"/><circle cx="24.0" cy="34.3" r="2.4" fill="#000"/><circle cx="21.1" cy="35.0" r="1.5" fill="#000"/><circle cx="12.9" cy="38.9" r="1.9" fill="#000"/><circle cx="32.6" cy="41.0" r="2.2" fill="#000"/><circle cx="22.2" cy="45.1" r="1.9" fill="#000"/><circle cx="36.5" cy="48.3" r="2.9" fill="#000"/><circle cx="33.6" cy="47.0" r="1.4" fill="#000"/><circle cx="17.9" cy="38.4" r="1.7" fill="#555"/><circle cx="43.7" cy="43.5" r="2.2" fill="#555"/></g></g>
<g transform="translate(120,120)" clip-path="url(#tcc)"><rect width="58" height="58" fill="#fff"/><path d="M28.3 1.8C28.2 3.3 27.9 7.9 27.7 10.7C27.6 13.5 27.8 15.3 27.4 18.4C27.0 21.5 25.4 26.5 25.2 29.5C25.0 32.5 25.9 34.3 26.2 36.4C26.5 38.4 27.5 39.8 27.2 41.8C26.9 43.8 25.0 46.4 24.3 48.3C23.6 50.3 22.7 52.1 23.0 53.5C23.2 54.8 24.9 56.5 26.0 56.5C27.2 56.5 28.7 54.8 29.8 53.5C30.9 52.1 31.5 50.3 32.5 48.3C33.5 46.4 35.6 43.8 35.8 41.8C35.9 39.8 34.2 38.4 33.4 36.4C32.6 34.3 31.0 32.5 31.0 29.5C31.0 26.5 33.4 21.5 33.6 18.4C33.7 15.3 32.3 13.5 31.9 10.7C31.4 7.9 31.1 3.4 30.7 1.8C30.3 0.1 29.7 0.9 29.5 0.8Z" fill="#050505" filter="url(#tb1)"/></g>
<g transform="translate(180,120)" clip-path="url(#tcc)"><rect width="58" height="58" fill="#fff"/><g filter="url(#tb03)"><path d="M26.1 2.1L25.8 53.5L27.1 53.5L26.6 2.1Z" fill="#111"/><path d="M26.3 31.2L29.7 32.1L29.3 35.0L32.8 35.5L29.3 36.4L30.5 38.9L30.7 45.8L29.0 46.6L30.5 48.3L28.3 49.7L29.3 51.8L34.1 52.3L28.0 53.0L26.3 54.3Z" fill="#111"/></g></g>
<g transform="translate(0,180)" clip-path="url(#tcc)"><rect width="58" height="58" fill="#fff"/><path d="M16.1 2.9C16.9 5.2 19.5 12.1 20.9 16.6C22.3 21.0 23.4 25.5 24.7 29.4C25.9 33.2 27.3 36.8 28.4 39.7C29.6 42.5 31.0 45.4 31.5 46.5" fill="none" stroke="#000" stroke-width="1.3"/><path d="M4.1 2.0C5.1 2.2 8.1 3.2 10.1 3.4C12.1 3.5 15.1 3.0 16.1 2.9" fill="none" stroke="#000" stroke-width="0.7"/><path d="M19.2 3.4C20.1 2.9 23.0 0.9 24.7 0.7C26.4 0.4 27.9 0.1 29.5 2.0C31.0 3.9 33.0 9.4 34.1 11.9C35.2 14.5 35.6 16.5 36.0 17.4" fill="none" stroke="#000" stroke-width="0.8"/><path d="M36.0 17.4C36.0 18.4 36.6 21.7 36.3 23.4C36.0 25.1 35.2 26.5 34.1 27.7C32.9 28.8 30.2 29.8 29.5 30.3" fill="none" stroke="#000" stroke-width="0.8"/><path d="M0.7 21.2C2.0 20.7 6.0 18.4 8.4 18.1C10.8 17.8 13.6 17.8 15.3 19.1C16.9 20.4 17.9 23.7 18.2 26.0C18.5 28.3 17.9 30.7 17.1 32.8C16.4 35.0 14.8 37.0 13.5 38.8C12.3 40.6 10.3 42.7 9.6 43.4" fill="none" stroke="#000" stroke-width="0.8"/><path d="M17.1 32.8C17.8 32.6 19.6 32.0 20.9 31.5C22.2 30.9 24.0 29.7 24.7 29.4" fill="none" stroke="#000" stroke-width="1.6"/><path d="M24.7 29.4C26.1 29.6 30.7 29.9 33.2 30.8C35.8 31.6 38.9 33.9 40.1 34.5" fill="none" stroke="#000" stroke-width="1.8"/><path d="M40.1 34.5C41.1 33.8 44.5 32.5 46.1 30.3C47.6 28.0 48.7 23.8 49.5 20.8C50.2 17.8 50.5 13.7 50.7 12.3" fill="none" stroke="#000" stroke-width="0.9"/><path d="M40.1 34.5C41.5 35.4 46.3 38.6 48.6 39.7C51.0 40.7 53.2 40.5 54.1 40.7" fill="none" stroke="#000" stroke-width="0.7"/><path d="M31.5 46.5C30.7 47.4 28.1 50.4 26.4 52.0C24.6 53.6 21.8 55.4 20.9 56.1" fill="none" stroke="#000" stroke-width="0.7"/><path d="M40.1 34.5C40.9 35.8 43.7 39.9 44.9 42.2C46.1 44.5 46.9 47.2 47.3 48.2" fill="none" stroke="#000" stroke-width="0.6"/><path d="M34.1 11.9C35.4 11.4 40.0 9.3 41.8 8.9C43.6 8.5 44.3 9.4 44.9 9.5" fill="none" stroke="#000" stroke-width="0.6"/><path d="M28.4 39.7C29.7 39.8 34.6 40.5 35.8 40.7" fill="none" stroke="#000" stroke-width="0.6"/><path d="M15.3 19.1C14.7 18.3 12.8 15.1 11.8 14.0C10.8 12.9 9.7 12.6 9.3 12.3" fill="none" stroke="#000" stroke-width="0.5"/><path d="M50.7 12.3C50.6 11.1 50.4 6.6 50.3 5.4" fill="none" stroke="#000" stroke-width="0.5"/><path d="M20.9 16.6C21.8 16.7 24.8 16.4 26.4 17.4C28.0 18.4 29.9 21.7 30.7 22.6" fill="none" stroke="#000" stroke-width="0.6"/><path d="M29.5 2.0C29.2 1.8 28.3 0.9 28.1 0.7" fill="none" stroke="#000" stroke-width="0.6"/><path d="M14.7 19.5L19.9 25.1L18.2 32.5L24.7 30.4L21.6 26.0L19.2 21.2Z" fill="#000"/><path d="M24.7 29.1L33.2 29.1L40.1 34.2L45.5 29.7L37.0 35.2L30.7 32.1Z" fill="#000"/><path d="M32.9 39.3L34.9 41.7L37.0 39.7Z" fill="#000"/></g>
<g transform="translate(60,180)" clip-path="url(#tcc)"><rect width="58" height="58" fill="#fff"/><g filter="url(#tb03)"><circle cx="30.2" cy="1.7" r="1.0" fill="#000"/><circle cx="18.2" cy="9.9" r="1.0" fill="#000"/><circle cx="36.9" cy="18.8" r="1.9" fill="#000"/><circle cx="0.9" cy="29.1" r="0.9" fill="#000"/><circle cx="27.5" cy="29.4" r="0.5" fill="#000"/><circle cx="26.3" cy="33.7" r="0.5" fill="#000"/><circle cx="17.2" cy="42.2" r="1.2" fill="#000"/><circle cx="56.2" cy="39.7" r="0.9" fill="#000"/><circle cx="41.3" cy="47.7" r="1.9" fill="#000"/><circle cx="50.4" cy="50.3" r="1.0" fill="#000"/><circle cx="23.2" cy="52.7" r="1.2" fill="#000"/><circle cx="24.9" cy="56.8" r="0.7" fill="#000"/></g></g>
<g transform="translate(120,180)" clip-path="url(#tcc)"><rect width="58" height="58" fill="#fff"/><rect x="0" y="0" width="58" height="58" fill="#c7e8fb"/><rect x="0.75" y="0.75" width="56.5" height="56.5" fill="none" stroke="#3c6c9c" stroke-width="1.5"/><path d="M15.3 10.2L28.1 8.9L43.1 8.5L43.8 17.4L44.9 32.8L45.5 49.1L31.5 49.9L17.0 49.9L15.8 32.8L14.4 19.1Z" fill="#0f1426" filter="url(#trough2)"/><g filter="url(#tspeck)" opacity="0.55"><path d="M15.3 10.2L28.1 8.9L43.1 8.5L43.8 17.4L44.9 32.8L45.5 49.1L31.5 49.9L17.0 49.9L15.8 32.8L14.4 19.1Z" fill="#3a4668"/></g></g>
<g transform="translate(180,180)" clip-path="url(#tcc)"><rect width="58" height="58" fill="#fff"/><defs><linearGradient id="tg33" x1="0" y1="0" x2="0" y2="1"><stop offset="0" stop-color="#000" stop-opacity="0.9"/><stop offset="0.68" stop-color="#000" stop-opacity="1"/><stop offset="0.82" stop-color="#000" stop-opacity="0.5"/><stop offset="1" stop-color="#000" stop-opacity="0.12"/></linearGradient></defs><g filter="url(#tgr3)"><rect x="4.0" y="4.5" width="50.2" height="51.2" rx="7" fill="url(#tg33)"/></g></g>
<g transform="translate(0,240)" clip-path="url(#tcc)"><rect width="58" height="58" fill="#fff"/><defs><linearGradient id="tg40" x1="0" y1="0" x2="0" y2="1"><stop offset="0" stop-color="#000" stop-opacity="0.66"/><stop offset="0.7" stop-color="#000" stop-opacity="0.72"/><stop offset="0.85" stop-color="#000" stop-opacity="0.25"/><stop offset="1" stop-color="#000" stop-opacity="0.1"/></linearGradient></defs><g filter="url(#tgr4)"><rect x="4.4" y="3.3" width="49.0" height="50.9" rx="12" fill="url(#tg40)"/></g></g>
<g transform="translate(60,240)" clip-path="url(#tcc)"><rect width="58" height="58" fill="#fff"/><g filter="url(#tb03)"><circle cx="6.6" cy="22.7" r="0.7" fill="#000" opacity="0.35"/><circle cx="18.6" cy="15.0" r="0.5" fill="#000" opacity="0.3"/><circle cx="29.7" cy="29.0" r="1.0" fill="#000" opacity="0.4"/><circle cx="49.9" cy="30.7" r="0.9" fill="#000" opacity="0.35"/><circle cx="15.7" cy="38.4" r="1.0" fill="#000" opacity="0.4"/><circle cx="24.0" cy="38.1" r="0.7" fill="#000" opacity="0.3"/><circle cx="51.1" cy="38.1" r="0.9" fill="#000" opacity="0.3"/><circle cx="44.6" cy="41.1" r="0.9" fill="#000" opacity="0.3"/><circle cx="33.6" cy="43.5" r="0.7" fill="#000" opacity="0.3"/><circle cx="10.0" cy="32.1" r="0.7" fill="#000" opacity="0.25"/><circle cx="22.0" cy="43.2" r="0.5" fill="#000" opacity="0.25"/><circle cx="37.4" cy="4.7" r="0.5" fill="#000" opacity="0.2"/><circle cx="47.7" cy="14.1" r="0.5" fill="#000" opacity="0.2"/><circle cx="34.8" cy="47.5" r="0.5" fill="#000" opacity="0.2"/></g></g>
<g transform="translate(120,240)" clip-path="url(#tcc)"><rect width="58" height="58" fill="#fff"/><g filter="url(#tb03)"><path d="M11.0 -1.3C14.4 1.8 27.4 10.7 31.5 17.5C35.6 24.4 35.6 32.9 35.8 39.8C35.9 46.6 32.9 55.5 32.4 58.6" stroke="#1a1a1a" stroke-opacity="0.88" stroke-width="3.9" fill="none"/><path d="M40.1 -1.3C40.9 1.3 44.9 7.3 45.2 14.1C45.5 21.0 43.8 32.4 41.8 39.8C39.8 47.2 34.6 55.5 33.2 58.6" stroke="#666" stroke-opacity="0.7" stroke-width="2.4" fill="none"/><path d="M-1.0 18.9C4.1 20.7 19.8 26.3 29.8 29.5C39.8 32.7 54.0 36.6 58.9 38.1" stroke="#262626" stroke-opacity="0.88" stroke-width="3.9" fill="none"/><path d="M-1.0 28.7C3.3 31.1 14.7 39.1 24.7 43.2C34.6 47.3 53.2 51.8 58.9 53.5" stroke="#1a1a1a" stroke-opacity="0.88" stroke-width="3.9" fill="none"/><path d="M-1.0 38.9C1.9 41.1 11.1 48.5 16.1 51.8C21.1 55.0 26.8 57.5 28.9 58.6" stroke="#2a2a2a" stroke-opacity="0.85" stroke-width="3.8" fill="none"/><path d="M58.9 13.3C57.5 17.1 54.6 29.7 50.3 36.4C46.1 43.1 39.1 49.7 33.2 53.5C27.4 57.2 18.2 58.0 15.3 58.9" stroke="#1a1a1a" stroke-opacity="0.88" stroke-width="3.9" fill="none"/><path d="M-1.0 47.5C0.9 49.4 8.3 57.0 10.1 58.9" stroke="#444" stroke-opacity="0.8" stroke-width="2.6" fill="none"/><path d="M-1.0 55.2C-0.1 55.8 3.3 58.3 4.1 58.9" stroke="#555" stroke-opacity="0.7" stroke-width="2.4" fill="none"/><path d="M58.9 22.7C56.9 26.7 50.0 40.6 46.9 46.6C43.8 52.7 41.2 56.9 40.1 58.9" stroke="#888" stroke-opacity="0.5" stroke-width="2.6" fill="none"/><path d="M19.5 -1.3C23.2 2.7 36.6 12.6 41.8 22.7C46.9 32.7 48.9 52.9 50.3 58.9" stroke="#333" stroke-opacity="0.6" stroke-width="3.4" fill="none"/><path d="M-1.0 33.8C2.4 36.2 12.1 44.1 19.5 48.3C26.9 52.5 39.5 57.2 43.5 58.9" stroke="#2a2a2a" stroke-opacity="0.8" stroke-width="3.6" fill="none"/><path d="M-1.0 7.3C1.6 9.5 11.0 15.5 14.4 21.0C17.8 26.4 20.4 33.4 19.5 39.8C18.7 46.1 11.0 55.7 9.3 58.9" stroke="#555" stroke-opacity="0.35" stroke-width="3.0" fill="none"/></g></g>
<g transform="translate(180,240)" clip-path="url(#tcc)"><rect width="58" height="58" fill="#fff"/><path d="M3.7 19.6C3.3 18.2 1.0 13.5 1.6 11.5C2.3 9.6 4.5 6.6 7.4 8.1C10.4 9.7 16.2 15.7 19.4 21.0C22.6 26.2 26.2 33.5 26.6 39.8C27.0 46.1 22.8 55.5 22.0 58.6" stroke="#000" stroke-width="2.9" fill="none" stroke-linecap="round"/><path d="M23.7 -0.4C25.8 2.6 33.2 10.8 36.5 17.5C39.9 24.2 42.9 32.9 43.7 39.8C44.6 46.6 42.0 55.5 41.7 58.6" stroke="#000" stroke-width="2.3" fill="none" stroke-linecap="round"/><path d="M46.8 1.8C47.0 2.7 49.0 4.4 47.8 7.3C46.7 10.2 43.8 15.5 40.0 19.2C36.1 23.0 27.1 27.8 24.6 29.5" stroke="#000" stroke-width="2.3" fill="none" stroke-linecap="round"/><path d="M58.8 17.5C57.1 20.1 52.5 28.1 48.5 32.9C44.5 37.8 39.0 42.8 34.8 46.6C30.7 50.5 25.6 54.5 23.7 56.0" stroke="#000" stroke-width="2.8" fill="none" stroke-linecap="round"/><path d="M54.0 19.8C51.9 21.7 45.1 28.0 41.7 31.2C38.3 34.5 35.0 37.9 33.6 39.3" stroke="#555" stroke-width="1.0" fill="none" stroke-linecap="round"/><path d="M6.6 -0.4C7.3 0.6 10.2 4.6 10.9 5.6" stroke="#999" stroke-width="0.7" fill="none" stroke-linecap="round"/></g>
<g transform="translate(0,300)" clip-path="url(#tcc)"><rect width="58" height="58" fill="#fff"/><g filter="url(#trough4)"><path d="M17.0 10.6C17.5 14.3 19.1 25.7 20.4 32.8C21.7 39.9 24.0 49.9 24.7 53.4" stroke="#000" stroke-width="9" fill="none"/><path d="M27.7 5.1C28.7 8.6 30.3 18.5 33.2 26.0C36.1 33.4 43.2 45.9 45.2 49.9" stroke="#000" stroke-width="6" fill="none"/><path d="M8.4 12.3L17.8 14.9L16.1 39.7L11.0 43.1L13.5 29.4L6.7 26.0Z" fill="#000"/><path d="M28.1 7.2L40.9 8.9" stroke="#000" stroke-width="1.6"/><path d="M28.9 10.6L41.8 13.1" stroke="#000" stroke-width="1.6"/><path d="M29.8 14.9L39.2 16.1" stroke="#000" stroke-width="1.6"/><path d="M33.2 19.1L43.5 20.8" stroke="#000" stroke-width="1.6"/><path d="M6.7 26.0L14.4 25.1" stroke="#000" stroke-width="1.6"/><path d="M9.3 32.8L16.1 34.5" stroke="#000" stroke-width="1.6"/><path d="M35.8 26.0L50.3 25.1" stroke="#000" stroke-width="1.6"/><path d="M38.4 32.8L53.8 32.0" stroke="#000" stroke-width="1.6"/><path d="M14.4 46.5L24.7 48.2" stroke="#000" stroke-width="1.6"/><path d="M37.5 39.7L48.6 41.4" stroke="#000" stroke-width="1.6"/><path d="M19.5 10.6C20.1 12.6 21.7 18.8 23.0 22.6C24.2 26.3 26.9 30.0 27.2 32.8C27.5 35.7 25.1 38.5 24.7 39.7" stroke="#000" stroke-width="5" fill="none"/></g></g>
<g transform="translate(60,300)" clip-path="url(#tcc)"><rect width="58" height="58" fill="#fff"/><g opacity="0.28" filter="url(#trough3)"><path d="M14.3 10.6C14.0 13.1 13.1 20.6 12.6 26.0C12.0 31.4 11.2 40.2 10.9 43.1" stroke="#000" stroke-width="0.9" fill="none"/><path d="M29.7 5.4C29.5 8.3 28.5 15.7 28.8 22.6C29.1 29.4 31.0 42.5 31.4 46.5" stroke="#000" stroke-width="0.9" fill="none"/><path d="M47.7 12.3C46.9 15.1 43.9 23.7 43.4 29.4C42.8 35.1 44.1 43.7 44.2 46.5" stroke="#000" stroke-width="0.9" fill="none"/><path d="M19.4 22.6C20.0 24.3 22.7 28.5 22.8 32.8C23.0 37.1 20.7 45.7 20.3 48.2" stroke="#000" stroke-width="0.9" fill="none"/><path d="M7.4 26.0C9.4 26.3 14.9 28.3 19.4 27.7C24.0 27.1 30.0 22.8 34.8 22.6C39.7 22.3 46.2 25.4 48.5 26.0" stroke="#000" stroke-width="0.9" fill="none"/><path d="M10.9 41.4C13.7 42.2 22.0 46.2 28.0 46.5C34.0 46.8 43.7 43.7 46.8 43.1" stroke="#000" stroke-width="0.9" fill="none"/><path d="M24.6 19.1C25.4 19.6 28.0 22.0 29.7 21.7C31.4 21.4 34.0 18.1 34.8 17.4" stroke="#000" stroke-width="0.9" fill="none"/></g><circle cx="28.8" cy="21.2" r="1.3" fill="#000" opacity="0.5"/></g>
<g transform="translate(120,300)" clip-path="url(#tcc)"><rect width="58" height="58" fill="#fff"/><g filter="url(#trough4)"><path d="M35.8 9.7C37.2 10.0 42.4 8.7 44.3 11.4C46.3 14.1 46.7 20.8 47.3 26.0C47.8 31.1 48.7 39.8 47.8 42.2C46.9 44.7 43.1 43.2 41.8 40.5C40.5 37.8 40.8 29.8 40.1 26.0C39.4 22.1 37.9 18.8 37.5 17.4Z" fill="#000"/><path d="M16.1 13.1L22.1 9.7L31.5 14.3L27.2 18.8L19.5 17.4Z" fill="#000"/><path d="M17.8 14.0C16.8 15.4 13.0 18.8 11.8 22.6C10.7 26.3 9.7 32.0 11.0 36.2C12.3 40.5 16.1 45.4 19.5 48.2C23.0 51.1 29.5 52.5 31.5 53.4" stroke="#000" stroke-width="2.6" fill="none"/><path d="M23.0 19.1C21.7 20.6 16.7 24.8 15.3 27.7C13.8 30.5 14.5 34.8 14.4 36.2" stroke="#000" stroke-width="3.4" fill="none"/><path d="M29.8 17.4C30.4 18.3 33.5 20.0 33.2 22.6C32.9 25.1 29.5 29.7 28.1 32.8C26.7 36.0 24.4 38.8 24.7 41.4C25.0 43.9 28.9 47.1 29.8 48.2" stroke="#000" stroke-width="2.6" fill="none"/><path d="M38.4 22.6C37.5 24.3 33.6 29.4 33.2 32.8C32.8 36.2 36.4 39.9 35.8 43.1C35.2 46.2 30.8 50.2 29.8 51.6" stroke="#000" stroke-width="2.4" fill="none"/><path d="M9.3 29.4C9.7 31.1 11.4 38.0 11.8 39.7" stroke="#000" stroke-width="2.5" fill="none"/><path d="M21.2 43.1C22.1 44.2 23.5 49.4 26.4 49.9C29.2 50.5 34.8 47.5 38.4 46.5C41.9 45.5 46.2 44.4 47.8 43.9" stroke="#000" stroke-width="2.6" fill="none"/><path d="M27.2 26.0C28.7 26.7 34.4 29.5 35.8 30.3" stroke="#000" stroke-width="1.0" fill="none"/><path d="M16.1 39.7C17.3 39.4 21.8 38.2 23.0 38.0" stroke="#000" stroke-width="1.0" fill="none"/></g></g>
<g transform="translate(180,300)" clip-path="url(#tcc)"><rect width="58" height="58" fill="#fff"/><defs><radialGradient id="tg53" cx="0.54" cy="0.55"><stop offset="0" stop-color="#000" stop-opacity="0.04"/><stop offset="0.55" stop-color="#000" stop-opacity="0.2"/><stop offset="0.78" stop-color="#000" stop-opacity="0.2"/><stop offset="1" stop-color="#000" stop-opacity="0"/></radialGradient></defs><circle cx="28.8" cy="29.6" r="17.5" fill="url(#tg53)"/><g filter="url(#tgr5)"><circle cx="28.8" cy="29.6" r="12.5" fill="#000" opacity="0.4"/></g><g filter="url(#tb1)"><ellipse cx="24.3" cy="32.1" rx="8" ry="6.5" fill="#fff" opacity="0.95"/></g><g filter="url(#tb06)"><ellipse cx="32.6" cy="33.6" rx="1.8" ry="4.6" fill="#111" opacity="0.85" transform="rotate(18 32.6 33.6)"/><path d="M22.8 24.6l4 -4M26.8 25.6l3 -5M30.8 26.6l2 -6M34.8 28.6l1 -6M37.3 31.6l1 5" stroke="#222" stroke-width="1.3" stroke-opacity="0.75" fill="none"/></g></g>
<g transform="translate(0,360)" clip-path="url(#tcc)"><rect width="58" height="58" fill="#fff"/><g filter="url(#tgr1)"><ellipse cx="30" cy="24" rx="24" ry="20" fill="#000" opacity="0.6"/></g><g filter="url(#trough3)"><path d="M12.6 32.5C12.5 30.1 11.5 21.4 12.1 17.9C12.7 14.3 13.6 11.6 15.9 11.1C18.3 10.5 23.3 14.3 26.1 14.5C28.9 14.7 30.4 11.6 32.9 12.2C35.3 12.8 39.1 14.5 40.8 17.9C42.5 21.2 42.7 30.1 43.1 32.5Z" fill="#000"/></g></g>
<g transform="translate(60,360)" clip-path="url(#tcc)"><rect width="58" height="58" fill="#fff"/><g filter="url(#tgr4)"><path d="M14.7 32.5L17.0 15.6L23.7 8.8L31.6 11.1L38.4 6.6L45.2 17.9L48.6 32.5Z" fill="#000" opacity="0.62"/></g><path d="M9.0 12.2L10.9 20.1" stroke="#999" stroke-width="0.8"/><path d="M33.9 6.6L39.6 3.2" stroke="#888" stroke-width="0.8"/></g>
<g transform="translate(120,360)" clip-path="url(#tcc)"><rect width="58" height="58" fill="#fff"/><g filter="url(#tgr4)"><path d="M5.5 32.5C5.7 30.1 4.4 21.6 6.7 17.9C8.9 14.1 14.0 11.8 19.1 9.9C24.2 8.1 32.7 6.0 37.2 6.6C41.7 7.1 43.6 10.7 46.2 13.3C48.8 16.0 52.0 19.2 53.0 22.4C53.9 25.6 52.0 30.8 51.9 32.5Z" fill="#000" opacity="0.5"/></g><g filter="url(#tb1)"><ellipse cx="25.9" cy="26.9" rx="8" ry="4" fill="#222" opacity="0.55"/></g></g>
<g transform="translate(180,360)" clip-path="url(#tcc)"><rect width="58" height="58" fill="#fff"/><path d="M2.0 6.6L6.5 2.5L55.1 2.5" stroke="#222" stroke-width="0.8" fill="none"/><path d="M2.0 6.6L2.0 31.4" stroke="#222" stroke-width="0.8" fill="none"/><path d="M6.5 2.5L6.5 31.4" stroke="#222" stroke-width="0.8" fill="none"/><path d="M11.1 9.3L39.3 9.3" stroke="#222" stroke-width="0.8" fill="none"/><path d="M19.0 -0.2L25.8 6.6L25.8 31.4" stroke="#222" stroke-width="0.8" fill="none"/><path d="M11.1 15.6L17.8 15.6L17.8 29.2L11.1 29.2L11.1 15.6" stroke="#222" stroke-width="0.8" fill="none"/><path d="M37.0 15.6L41.6 12.9L46.1 15.6L46.1 22.4" stroke="#222" stroke-width="0.8" fill="none"/><path d="M55.1 15.6L56.3 29.2" stroke="#222" stroke-width="0.8" fill="none"/><path d="M13.3 19.0L16.7 19.0" stroke="#222" stroke-width="0.8" fill="none"/><path d="M13.3 23.5L16.7 23.5" stroke="#222" stroke-width="0.8" fill="none"/><path d="M26.9 26.9L54.0 26.9" stroke="#222" stroke-width="0.8" fill="none"/><path d="M39.3 17.9L43.8 17.9" stroke="#222" stroke-width="0.8" fill="none"/><path d="M48.3 20.1L48.3 26.9" stroke="#222" stroke-width="0.8" fill="none"/><circle cx="31.4" cy="27.3" r="2.6" fill="none" stroke="#000" stroke-width="1.6"/><circle cx="16.0" cy="21.9" r="1.8" fill="none" stroke="#222" stroke-width="0.9"/><rect x="19.0" y="7.6" width="1.4" height="1.6" fill="#111"/><rect x="21.7" y="7.6" width="1.4" height="1.6" fill="#111"/><rect x="25.8" y="7.6" width="1.4" height="1.6" fill="#111"/><rect x="28.0" y="7.6" width="1.4" height="1.6" fill="#111"/></g>
</svg>
<div style="left:521px;top:192px;width:15px;height:361px;background:#363636;border-right:1px solid #2b2b2b;"></div>
<div style="left:522px;top:192px;width:13px;height:13px;background:#3c3c3c;border:1px solid #565656;"></div>
<svg style="left:524px;top:196px;" width="8" height="4" viewBox="0 0 8 4"><path d="M0 4H8L4.0 0Z" fill="#b8b8b8"/></svg>
<div style="left:522px;top:540px;width:13px;height:13px;background:#3c3c3c;border:1px solid #565656;"></div>
<svg style="left:524px;top:544px;" width="8" height="4" viewBox="0 0 8 4"><path d="M0 0H8L4.0 4Z" fill="#b8b8b8"/></svg>
<div style="left:522px;top:408px;width:13px;height:26px;background:linear-gradient(90deg,#404040,#383838);border:1px solid #6c6c6c;"></div>
<div style="left:254px;top:555px;width:191px;height:21px;background:#1e1e1e;border-radius:3px;"></div>
<span id="t46" class="t" style="left:256.5px;transform-origin:0 50%;top:558px;font-size:12px;line-height:17px;color:#7e7e7e;transform:scaleX(0.8940);">Search</span>
<div class="cb" style="left:451px;top:558px;width:14px;height:14px;"></div>
<svg style="left:451px;top:558px;" width="14" height="14" viewBox="0 0 14 14"><path d="M2.8 6.5L6.2 11.1L11.2 2.9" fill="none" stroke="#d6d6d6" stroke-width="1.5"/></svg>
<span id="t47" class="t" style="left:470.3px;transform-origin:0 50%;top:558px;font-size:12px;line-height:17px;color:#e4e4e4;transform:scaleX(0.9704);"><u>F</u>ilter in Tag</span>
<div class="btn" style="left:254px;top:584px;width:78px;height:22px;"></div>
<svg style="left:266px;top:588px;" width="14" height="14" viewBox="0 0 14 14"><path d="M7 0V14M0 7H14" stroke="#dcdcdc" stroke-width="1.8" fill="none"/></svg>
<span id="t48" class="t" style="left:283px;transform-origin:0 50%;top:588px;font-size:12px;line-height:17px;color:#e4e4e4;transform:scaleX(1.0667);"><u>I</u>mport</span>
<div class="btn" style="left:334px;top:584px;width:78px;height:22px;"></div>
<svg style="left:347px;top:588px;" width="14" height="14" viewBox="0 0 14 14"><path d="M7 0V14M0 7H14" stroke="#dcdcdc" stroke-width="1.8" fill="none"/></svg>
<span id="t49" class="t" style="left:364.3px;transform-origin:0 50%;top:588px;font-size:12px;line-height:17px;color:#e4e4e4;transform:scaleX(0.9715);">Stamp</span>
<div class="btn" style="left:414px;top:584px;width:78px;height:22px;"></div>
<svg style="left:418px;top:588px;" width="14" height="14" viewBox="0 0 14 14"><path d="M7 0V14M0 7H14" stroke="#dcdcdc" stroke-width="1.8" fill="none"/></svg>
<span id="t50" class="t" style="left:435.3px;transform-origin:0 50%;top:588px;font-size:12px;line-height:17px;color:#e4e4e4;transform:scaleX(1.0063);"><u>C</u>lipboard</span>
<div class="btn" style="left:494px;top:584px;width:41px;height:22px;"></div>
<svg style="left:508px;top:588px;" width="12" height="14" viewBox="0 0 12 14"><path d="M4 0.5H8V2H12V3.6H0V2H4Z" fill="#d0d0d0"/><path d="M1 4.6H11V13Q11 14 10 14H2Q1 14 1 13Z" fill="#d0d0d0"/></svg>
<span id="t51" class="t" style="left:544.3px;transform-origin:0 50%;top:170px;font-size:16px;line-height:22px;color:#e4e4e4;transform:scaleX(0.9522);">square_eroded</span>
<span id="t52" class="t" style="left:543.7px;transform-origin:0 50%;top:194px;font-size:12px;line-height:17px;color:#e4e4e4;transform:scaleX(0.9329);">Mask (150 x 150)</span>
<span id="t53" class="t" style="left:547.3px;transform-origin:0 50%;top:231px;font-size:12px;line-height:17px;color:#e4e4e4;transform:scaleX(0.8468);">Size:</span>
<div style="left:596px;top:228px;width:228px;height:20px;background:#1e1e1e;border-radius:1.5px;"></div>
<div style="left:596px;top:228px;width:70px;height:20px;background:#53728e;border-radius:1.5px 0 0 1.5px;"></div>
<span id="t54" class="t" style="left:681px;transform-origin:0 50%;top:231px;font-size:12px;line-height:17px;color:#e4e4e4;transform:scaleX(0.9121);">35.73 px</span>
<div style="left:811px;top:228px;width:13px;height:20px;background:linear-gradient(#404040,#383838);border:1px solid #565656;border-left:none;border-radius:0 3px 3px 0;"></div>
<svg style="left:813px;top:232.0px;" width="8" height="4.2" viewBox="0 0 8 4.2"><path d="M0 4.2H8L4.0 0Z" fill="#b8b8b8"/></svg>
<svg style="left:813px;top:240.0px;" width="8" height="4.2" viewBox="0 0 8 4.2"><path d="M0 0H8L4.0 4.2Z" fill="#b8b8b8"/></svg>
<span id="t55" class="t" style="left:546.8px;transform-origin:0 50%;top:266px;font-size:12px;line-height:17px;color:#e4e4e4;transform:scaleX(0.9785);">Rotation:</span>
<svg style="left:596px;top:263px;" width="22" height="22" viewBox="0 0 22 22"><circle cx="10.7" cy="10.6" r="10.1" fill="#1b1b1b" stroke="#555" stroke-width="1"/>
<path d="M10.7 2V8M10.7 13V19M2 10.6H8" stroke="#333" stroke-width="1" stroke-dasharray="1 1.5"/>
<path d="M10.7 10.6H21" stroke="#e8e8e8" stroke-width="1.2"/><circle cx="10.7" cy="10.6" r="1.3" fill="#e8e8e8"/><circle cx="20.6" cy="10.6" r="1" fill="#e8e8e8"/></svg>
<div style="left:624px;top:264px;width:61px;height:19px;background:#1e1e1e;border-radius:3px;"></div>
<span id="t56" class="t" style="left:626px;transform-origin:0 50%;top:266px;font-size:12px;line-height:17px;color:#e4e4e4;transform:scaleX(0.9701);">0°</span>
<div style="left:672px;top:264px;width:13px;height:19px;background:linear-gradient(#404040,#383838);border:1px solid #565656;border-left:none;border-radius:0 3px 3px 0;"></div>
<svg style="left:674px;top:267.5px;" width="8" height="4.2" viewBox="0 0 8 4.2"><path d="M0 4.2H8L4.0 0Z" fill="#b8b8b8"/></svg>
<svg style="left:674px;top:275.5px;" width="8" height="4.2" viewBox="0 0 8 4.2"><path d="M0 0H8L4.0 4.2Z" fill="#b8b8b8"/></svg>
<svg style="left:694px;top:263px;" width="22" height="22" viewBox="0 0 22 22"><circle cx="11" cy="10.1" r="9.8" fill="none" stroke="#8c8c8c" stroke-width="1"/><path d="M9.9 5.699999999999999h2.2M6.6 9.0v2.2M9.9 14.5h2.2M15.4 9.0v2.2M9.9 2.6999999999999993h2.2M3.5999999999999996 9.0v2.2M9.9 17.5h2.2M18.4 9.0v2.2" stroke="#6e6e6e" stroke-width="0.9" fill="none"/><path d="M4.8 3.7L11 10.3L17.2 3.7" fill="none" stroke="#cdcdcd" stroke-width="1.4"/><circle cx="11" cy="10.3" r="2.1" fill="#cdcdcd"/><circle cx="4.8" cy="3.7" r="1.8" fill="#cdcdcd"/><circle cx="17.2" cy="3.7" r="1.8" fill="#cdcdcd"/></svg>
<svg style="left:723px;top:263px;" width="22" height="22" viewBox="0 0 22 22"><circle cx="11" cy="10.1" r="9.8" fill="none" stroke="#8c8c8c" stroke-width="1"/><path d="M9.9 5.699999999999999h2.2M6.6 9.0v2.2M9.9 14.5h2.2M15.4 9.0v2.2M9.9 2.6999999999999993h2.2M3.5999999999999996 9.0v2.2M9.9 17.5h2.2M18.4 9.0v2.2" stroke="#6e6e6e" stroke-width="0.9" fill="none"/><path d="M17.3 3.7L10.7 10.1L17.3 16.6" fill="none" stroke="#cdcdcd" stroke-width="1.4"/><circle cx="10.7" cy="10.1" r="2.1" fill="#cdcdcd"/><circle cx="17.3" cy="3.7" r="1.8" fill="#cdcdcd"/><circle cx="17.3" cy="16.6" r="1.8" fill="#cdcdcd"/></svg>
<svg style="left:752px;top:263px;" width="22" height="22" viewBox="0 0 22 22"><circle cx="11" cy="10.1" r="9.8" fill="none" stroke="#8c8c8c" stroke-width="1"/><path d="M9.9 5.699999999999999h2.2M6.6 9.0v2.2M9.9 14.5h2.2M15.4 9.0v2.2M9.9 2.6999999999999993h2.2M3.5999999999999996 9.0v2.2M9.9 17.5h2.2M18.4 9.0v2.2" stroke="#6e6e6e" stroke-width="0.9" fill="none"/><path d="M4.7 16.6L17.4 3.6" fill="none" stroke="#cdcdcd" stroke-width="1.4"/><circle cx="11" cy="10.1" r="2.1" fill="#cdcdcd"/><circle cx="4.8" cy="16.5" r="1.8" fill="#cdcdcd"/><circle cx="17.3" cy="3.7" r="1.8" fill="#cdcdcd"/></svg>
<span id="t57" class="t" style="left:547.3px;transform-origin:0 50%;top:302px;font-size:12px;line-height:17px;color:#e4e4e4;transform:scaleX(0.9550);">Spacing:</span>
<div class="cb" style="left:595px;top:301px;width:14px;height:14px;"></div>
<svg style="left:595px;top:301px;" width="14" height="14" viewBox="0 0 14 14"><path d="M2.8 6.5L6.2 11.1L11.2 2.9" fill="none" stroke="#d6d6d6" stroke-width="1.5"/></svg>
<span id="t58" class="t" style="left:614px;transform-origin:0 50%;top:302px;font-size:12px;line-height:17px;color:#e4e4e4;transform:scaleX(1.0525);"><u>A</u>uto</span>
<div style="left:653px;top:299px;width:171px;height:20px;background:#1e1e1e;border-radius:1.5px;"></div>
<div style="left:653px;top:299px;width:57px;height:20px;background:#53728e;border-radius:1.5px 0 0 1.5px;"></div>
<span id="t59" class="t" style="left:721.7px;transform-origin:0 50%;top:302px;font-size:12px;line-height:17px;color:#e4e4e4;transform:scaleX(0.8904);">0.50</span>
<div style="left:811px;top:299px;width:13px;height:20px;background:linear-gradient(#404040,#383838);border:1px solid #565656;border-left:none;border-radius:0 3px 3px 0;"></div>
<svg style="left:813px;top:303.0px;" width="8" height="4.2" viewBox="0 0 8 4.2"><path d="M0 4.2H8L4.0 0Z" fill="#b8b8b8"/></svg>
<svg style="left:813px;top:311.0px;" width="8" height="4.2" viewBox="0 0 8 4.2"><path d="M0 0H8L4.0 4.2Z" fill="#b8b8b8"/></svg>
<span id="t60" class="t" style="left:547.3px;transform-origin:0 50%;top:332px;font-size:12px;line-height:17px;color:#e4e4e4;transform:scaleX(0.9938);">Brush mode</span>
<div class="fr" style="left:548px;top:350px;width:277px;height:165px;"></div>
<div class="btnd" style="left:560px;top:362px;width:252px;height:21px;"></div>
<span id="t61" class="t" style="left:564.3px;transform-origin:0 50%;top:365px;font-size:12px;line-height:17px;color:#858585;transform:scaleX(0.9840);">Alpha Mask</span>
<svg style="left:798px;top:370px;" width="7" height="4" viewBox="0 0 7 4"><path d="M0 0H7L3.5 4Z" fill="#7c7c7c"/></svg>
<div style="left:589px;top:394px;width:14px;height:14px;background:#1e1e1e;border:1px solid #2a2a2a;"></div>
<span id="t62" class="t" style="left:607.6px;transform-origin:0 50%;top:394px;font-size:12px;line-height:17px;color:#858585;transform:scaleX(1.0316);">A<u>u</u>to</span>
<div style="left:646px;top:392px;width:166px;height:21px;background:#1d1d1d;border-radius:3px;border:1px solid #262626;"></div>
<div style="left:647px;top:393px;width:75px;height:19px;background:#2e2e2e;border-radius:2px 0 0 2px;"></div>
<span id="t63" class="t" style="left:675.5px;transform-origin:0 50%;top:395px;font-size:12px;line-height:17px;color:#858585;transform:scaleX(0.9870);">Neutral point: 127</span>
<div style="left:799px;top:392px;width:13px;height:21px;background:linear-gradient(#393939,#343434);border:1px solid #484848;border-left:none;border-radius:0 3px 3px 0;"></div>
<svg style="left:801px;top:396.5px;" width="8" height="4.2" viewBox="0 0 8 4.2"><path d="M0 4.2H8L4.0 0Z" fill="#808080"/></svg>
<svg style="left:801px;top:404.5px;" width="8" height="4.2" viewBox="0 0 8 4.2"><path d="M0 0H8L4.0 4.2Z" fill="#808080"/></svg>
<div style="left:589px;top:421px;width:223px;height:22px;background:#1d1d1d;border-radius:3px;border:1px solid #262626;"></div>
<div style="left:590px;top:422px;width:104px;height:20px;background:#2e2e2e;border-radius:2px 0 0 2px;"></div>
<span id="t64" class="t" style="left:655.4px;transform-origin:0 50%;top:425px;font-size:12px;line-height:17px;color:#858585;transform:scaleX(0.9539);">Brightness: 0%</span>
<div style="left:799px;top:421px;width:13px;height:22px;background:linear-gradient(#393939,#343434);border:1px solid #484848;border-left:none;border-radius:0 3px 3px 0;"></div>
<svg style="left:801px;top:426.0px;" width="8" height="4.2" viewBox="0 0 8 4.2"><path d="M0 4.2H8L4.0 0Z" fill="#808080"/></svg>
<svg style="left:801px;top:434.0px;" width="8" height="4.2" viewBox="0 0 8 4.2"><path d="M0 0H8L4.0 4.2Z" fill="#808080"/></svg>
<div style="left:589px;top:451px;width:223px;height:21px;background:#1d1d1d;border-radius:3px;border:1px solid #262626;"></div>
<div style="left:590px;top:452px;width:104px;height:19px;background:#2e2e2e;border-radius:2px 0 0 2px;"></div>
<span id="t65" class="t" style="left:660.4px;transform-origin:0 50%;top:455px;font-size:12px;line-height:17px;color:#858585;transform:scaleX(0.9658);">Contrast: 0%</span>
<div style="left:799px;top:451px;width:13px;height:21px;background:linear-gradient(#393939,#343434);border:1px solid #484848;border-left:none;border-radius:0 3px 3px 0;"></div>
<svg style="left:801px;top:455.5px;" width="8" height="4.2" viewBox="0 0 8 4.2"><path d="M0 4.2H8L4.0 0Z" fill="#808080"/></svg>
<svg style="left:801px;top:463.5px;" width="8" height="4.2" viewBox="0 0 8 4.2"><path d="M0 0H8L4.0 4.2Z" fill="#808080"/></svg>
<div class="btnd" style="left:590px;top:481px;width:222px;height:21px;"></div>
<span id="t66" class="t" style="left:652.3px;transform-origin:0 50%;top:484px;font-size:12px;line-height:17px;color:#858585;transform:scaleX(0.9762);">Reset A<u>d</u>justments</span>
<div class="cb" style="left:547px;top:528px;width:14px;height:14px;"></div>
<svg style="left:547px;top:528px;" width="14" height="14" viewBox="0 0 14 14"><path d="M2.8 6.5L6.2 11.1L11.2 2.9" fill="none" stroke="#d6d6d6" stroke-width="1.5"/></svg>
<span id="t67" class="t" style="left:566.3px;transform-origin:0 50%;top:528px;font-size:12px;line-height:17px;color:#e4e4e4;transform:scaleX(0.9377);">Preserve <u>B</u>rush Preset Settings</span>
<div class="btn" style="left:596px;top:557px;width:228px;height:21px;"></div>
<span id="t68" class="t" style="left:656px;transform-origin:0 50%;top:560px;font-size:12px;line-height:17px;color:#e4e4e4;transform:scaleX(0.9547);">Reset Predefined Tip</span>
<div class="cb" style="left:243px;top:627px;width:14px;height:14px;"></div>
<span id="t69" class="t" style="left:262.3px;transform-origin:0 50%;top:628px;font-size:12px;line-height:17px;color:#e4e4e4;transform:scaleX(1.0410);">Auto</span>
<span id="t70" class="t" style="left:299.9px;transform-origin:0 50%;top:628px;font-size:12px;line-height:17px;color:#e4e4e4;transform:scaleX(0.9680);">Precision:</span>
<div style="left:358px;top:625px;width:476px;height:20px;background:#1e1e1e;border-radius:1.5px;"></div>
<div style="left:358px;top:625px;width:116px;height:20px;background:#53728e;border-radius:1.5px 0 0 1.5px;"></div>
<span id="t71" class="t" style="left:586px;transform-origin:0 50%;top:628px;font-size:12px;line-height:17px;color:#e4e4e4;transform:scaleX(0.9720);">2</span>
<div style="left:821px;top:625px;width:13px;height:20px;background:linear-gradient(#404040,#383838);border:1px solid #565656;border-left:none;border-radius:0 3px 3px 0;"></div>
<svg style="left:823px;top:629.0px;" width="8" height="4.2" viewBox="0 0 8 4.2"><path d="M0 4.2H8L4.0 0Z" fill="#b8b8b8"/></svg>
<svg style="left:823px;top:637.0px;" width="8" height="4.2" viewBox="0 0 8 4.2"><path d="M0 0H8L4.0 4.2Z" fill="#b8b8b8"/></svg>
<div class="cb" style="left:64px;top:678px;width:14px;height:14px;"></div>
<span id="t72" class="t" style="left:83.2px;transform-origin:0 50%;top:678px;font-size:12px;line-height:17px;color:#e4e4e4;transform:scaleX(0.9307);"><u>E</u>raser switch size</span>
<div class="cb" style="left:184px;top:678px;width:14px;height:14px;"></div>
<span id="t73" class="t" style="left:203px;transform-origin:0 50%;top:678px;font-size:12px;line-height:17px;color:#e4e4e4;transform:scaleX(0.9701);">E<u>r</u>aser switch opacity</span>
<div class="cb" style="left:324px;top:678px;width:14px;height:14px;"></div>
<svg style="left:324px;top:678px;" width="14" height="14" viewBox="0 0 14 14"><path d="M2.8 6.5L6.2 11.1L11.2 2.9" fill="none" stroke="#d6d6d6" stroke-width="1.5"/></svg>
<span id="t74" class="t" style="left:343.7px;transform-origin:0 50%;top:678px;font-size:12px;line-height:17px;color:#e4e4e4;transform:scaleX(0.9321);">Te<u>m</u>porarily Save Tweaks To Presets</span>
<div class="cb" style="left:692px;top:678px;width:14px;height:14px;"></div>
<span id="t75" class="t" style="left:710px;transform-origin:0 50%;top:678px;font-size:12px;line-height:17px;color:#e4e4e4;transform:scaleX(0.9749);text-decoration:line-through;text-decoration-thickness:1px;">I<u>n</u>stant Preview</span>
<div class="btn" style="left:809px;top:674px;width:38px;height:22px;"></div>
<div style="left:822px;top:680px;width:12px;height:2px;background:#dcdcdc;"></div>
<div style="left:822px;top:684px;width:12px;height:2px;background:#dcdcdc;"></div>
<div style="left:822px;top:688px;width:12px;height:2px;background:#dcdcdc;"></div>
<svg style="left:837px;top:684px;" width="5" height="3" viewBox="0 0 5 3"><path d="M0 0H5L2.5 3Z" fill="#a8a8a8"/></svg>
</body></html>
